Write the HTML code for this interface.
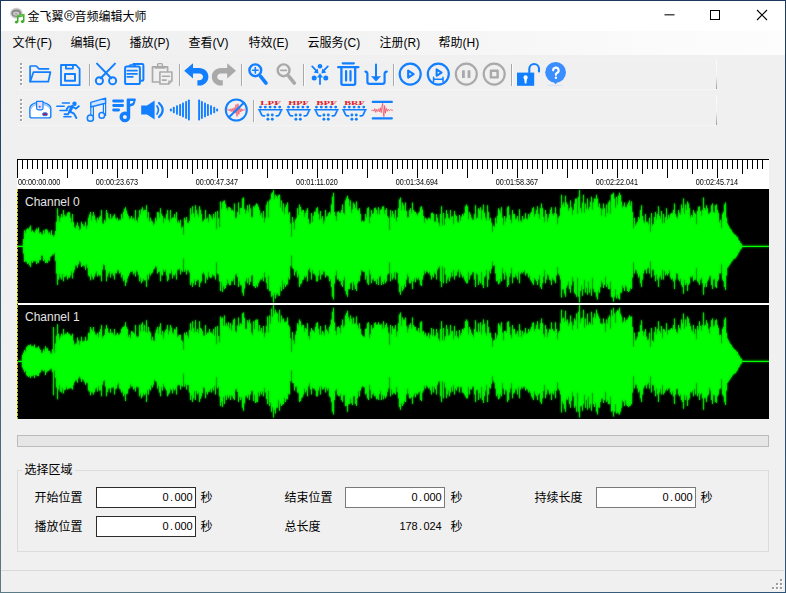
<!DOCTYPE html>
<html lang="zh"><head><meta charset="utf-8"><title>audio editor</title>
<style>
html,body{margin:0;padding:0}
body{width:786px;height:593px;position:relative;overflow:hidden;background:#f0f0f0;font-family:"Liberation Sans",sans-serif;color:#000}
div{position:absolute;box-sizing:border-box}
#titlebar{left:1px;top:1px;width:784px;height:30px;background:#fff}
#menubar{left:1px;top:31px;width:784px;height:24px;background:linear-gradient(to right,#f0f0f0 0%,#f2f2f2 40%,#fbfbfb 85%,#fdfdfd 100%)}
#tb1{left:18px;top:59px;width:699px;height:31px;border-top:1px solid #f2f2f2;border-bottom:1px solid #f5f5f5}
#tb2{left:18px;top:95px;width:699px;height:31px;border-top:1px solid #f2f2f2;border-bottom:1px solid #f5f5f5}
.tbend{left:716px;width:1px;background:linear-gradient(to bottom,#fdfdfd 0%,#f4f4f4 55%,#9a9a9a 100%)}
.grip{left:20px;width:2px;background:repeating-linear-gradient(to bottom,#a3a3a3 0,#a3a3a3 2px,transparent 2px,transparent 4px)}
.grip2{left:21px;width:2px;background:repeating-linear-gradient(to bottom,#fff 0,#fff 2px,transparent 2px,transparent 4px)}
#ruler{left:17px;top:159px;width:752px;height:30px;background:#fff;border-top:1px solid #000}
.tl{top:178px;font-size:8.2px;line-height:9px;white-space:nowrap;color:#000;transform:scaleX(0.885)}
#wavebox{left:17px;top:189px;width:752px;height:230px;background:#000}
#chsep{left:17px;top:303px;width:752px;height:2px;background:#fff}
.chl{left:25px;font-size:12px;line-height:14px;color:#e4e4e4;white-space:nowrap}
#cursor{left:17px;top:189px;width:1px;height:230px;background:repeating-linear-gradient(to bottom,#c4c400 0,#c4c400 3px,#000 3px,#000 4px)}
#prog{left:17px;top:435px;width:752px;height:12px;background:#e6e6e6;border:1px solid #bcbcbc}
#group{left:17px;top:470px;width:752px;height:82px;border:1px solid #dcdcdc}
#glabel{left:22px;top:462px;width:53px;height:14px;background:#f0f0f0}
.tb{height:21px;width:100px;background:#fff;border:1px solid #7a7a7a}
.tb.dk{border-color:#2b2b2b}
.num{font-size:11px;line-height:12px;white-space:nowrap;text-align:right;width:60px;color:#000}
.num span{display:inline-block;width:6px;text-align:center}
#statusline{left:1px;top:570px;width:783px;height:1px;background:#d9d9d9}
.gd{width:2px;height:2px;background:#9d9d9d;box-shadow:1px 1px 0 #fff}
svg{position:absolute;left:0;top:0}
svg text.ui{font-family:"Liberation Sans","Noto Sans CJK SC",sans-serif;font-size:12px;fill:#000}
svg text.flt{font-family:"Liberation Serif",serif;font-weight:bold;font-size:6.5px;fill:#e0202c}
</style></head><body>
<div id="titlebar"></div>
<div id="menubar"></div>
<div id="tb1"></div><div id="tb2"></div>
<div class="tbend" style="top:60px;height:29px"></div><div class="tbend" style="top:96px;height:29px"></div>
<div class="grip2" style="top:64px;height:22px"></div><div class="grip2" style="top:100px;height:22px"></div>
<div class="grip" style="top:63px;height:22px"></div><div class="grip" style="top:99px;height:22px"></div>
<div id="ruler"></div>
<div class="tl" style="left:18px;transform-origin:left center">00:00:00.000</div><div class="tl" style="left:77px;width:80px;text-align:center">00:00:23.673</div><div class="tl" style="left:177px;width:80px;text-align:center">00:00:47.347</div><div class="tl" style="left:277px;width:80px;text-align:center">00:01:11.020</div><div class="tl" style="left:377px;width:80px;text-align:center">00:01:34.694</div><div class="tl" style="left:477px;width:80px;text-align:center">00:01:58.367</div><div class="tl" style="left:577px;width:80px;text-align:center">00:02:22.041</div><div class="tl" style="left:677px;width:80px;text-align:center">00:02:45.714</div>
<div id="wavebox"></div>
<div id="prog"></div>
<div id="group"></div><div id="glabel"></div>
<div class="tb dk" style="left:96px;top:487px"></div>
<div class="tb dk" style="left:96px;top:516px"></div>
<div class="tb" style="left:345px;top:487px"></div>
<div class="tb" style="left:596px;top:487px"></div>
<div class="num" style="left:132.5px;top:491px"><span>0</span><span>.</span><span>0</span><span>0</span><span>0</span></div>
<div class="num" style="left:132.5px;top:520px"><span>0</span><span>.</span><span>0</span><span>0</span><span>0</span></div>
<div class="num" style="left:381.5px;top:491px"><span>0</span><span>.</span><span>0</span><span>0</span><span>0</span></div>
<div class="num" style="left:381.5px;top:520px"><span>1</span><span>7</span><span>8</span><span>.</span><span>0</span><span>2</span><span>4</span></div>
<div class="num" style="left:632.5px;top:491px"><span>0</span><span>.</span><span>0</span><span>0</span><span>0</span></div>
<div id="statusline"></div>
<div class="gd" style="left:780px;top:579px"></div>
<div class="gd" style="left:776px;top:583px"></div><div class="gd" style="left:780px;top:583px"></div>
<div class="gd" style="left:772px;top:587px"></div><div class="gd" style="left:776px;top:587px"></div><div class="gd" style="left:780px;top:587px"></div>
<svg width="786" height="593" viewBox="0 0 786 593">
<text class="ui" x="27.6" y="20.6">金飞翼</text>
<circle cx="69.5" cy="15.5" r="4.75" fill="none" stroke="#000" stroke-width="0.95"/>
<text x="69.6" y="18.2" text-anchor="middle" font-family="Liberation Sans,sans-serif" font-size="7.6" fill="#000">R</text>
<text class="ui" x="74.4" y="20.6">音频编辑大师</text>
<text class="ui" x="12.6" y="47.2">文件(F)</text>
<text class="ui" x="70.6" y="47.2">编辑(E)</text>
<text class="ui" x="129.6" y="47.2">播放(P)</text>
<text class="ui" x="188.6" y="47.2">查看(V)</text>
<text class="ui" x="248.6" y="47.2">特效(E)</text>
<text class="ui" x="307.6" y="47.2">云服务(C)</text>
<text class="ui" x="379.6" y="47.2">注册(R)</text>
<text class="ui" x="438.6" y="47.2">帮助(H)</text>
<text class="ui" x="24.6" y="474.2">选择区域</text>
<text class="ui" x="34.6" y="501.9">开始位置</text>
<text class="ui" x="34.6" y="530.9">播放位置</text>
<text class="ui" x="284.6" y="501.9">结束位置</text>
<text class="ui" x="284.6" y="530.9">总长度</text>
<text class="ui" x="534.6" y="501.9">持续长度</text>
<text class="ui" x="200.6" y="501.9">秒</text>
<text class="ui" x="200.6" y="530.9">秒</text>
<text class="ui" x="450.6" y="501.9">秒</text>
<text class="ui" x="450.6" y="530.9">秒</text>
<text class="ui" x="700.6" y="501.9">秒</text>
<path fill="#000" d="M17 160v18h1v-18zM22 160v9h1v-9zM27 160v9h1v-9zM32 160v9h1v-9zM37 160v9h1v-9zM42 160v14h1v-14zM47 160v9h1v-9zM52 160v9h1v-9zM57 160v9h1v-9zM62 160v9h1v-9zM67 160v18h1v-18zM72 160v9h1v-9zM77 160v9h1v-9zM82 160v9h1v-9zM87 160v9h1v-9zM92 160v14h1v-14zM97 160v9h1v-9zM102 160v9h1v-9zM107 160v9h1v-9zM112 160v9h1v-9zM117 160v18h1v-18zM122 160v9h1v-9zM127 160v9h1v-9zM132 160v9h1v-9zM137 160v9h1v-9zM142 160v14h1v-14zM147 160v9h1v-9zM152 160v9h1v-9zM157 160v9h1v-9zM162 160v9h1v-9zM167 160v18h1v-18zM172 160v9h1v-9zM177 160v9h1v-9zM182 160v9h1v-9zM187 160v9h1v-9zM192 160v14h1v-14zM197 160v9h1v-9zM202 160v9h1v-9zM207 160v9h1v-9zM212 160v9h1v-9zM217 160v18h1v-18zM222 160v9h1v-9zM227 160v9h1v-9zM232 160v9h1v-9zM237 160v9h1v-9zM242 160v14h1v-14zM247 160v9h1v-9zM252 160v9h1v-9zM257 160v9h1v-9zM262 160v9h1v-9zM267 160v18h1v-18zM272 160v9h1v-9zM277 160v9h1v-9zM282 160v9h1v-9zM287 160v9h1v-9zM292 160v14h1v-14zM297 160v9h1v-9zM302 160v9h1v-9zM307 160v9h1v-9zM312 160v9h1v-9zM317 160v18h1v-18zM322 160v9h1v-9zM327 160v9h1v-9zM332 160v9h1v-9zM337 160v9h1v-9zM342 160v14h1v-14zM347 160v9h1v-9zM352 160v9h1v-9zM357 160v9h1v-9zM362 160v9h1v-9zM367 160v18h1v-18zM372 160v9h1v-9zM377 160v9h1v-9zM382 160v9h1v-9zM387 160v9h1v-9zM392 160v14h1v-14zM397 160v9h1v-9zM402 160v9h1v-9zM407 160v9h1v-9zM412 160v9h1v-9zM417 160v18h1v-18zM422 160v9h1v-9zM427 160v9h1v-9zM432 160v9h1v-9zM437 160v9h1v-9zM442 160v14h1v-14zM447 160v9h1v-9zM452 160v9h1v-9zM457 160v9h1v-9zM462 160v9h1v-9zM467 160v18h1v-18zM472 160v9h1v-9zM477 160v9h1v-9zM482 160v9h1v-9zM487 160v9h1v-9zM492 160v14h1v-14zM497 160v9h1v-9zM502 160v9h1v-9zM507 160v9h1v-9zM512 160v9h1v-9zM517 160v18h1v-18zM522 160v9h1v-9zM527 160v9h1v-9zM532 160v9h1v-9zM537 160v9h1v-9zM542 160v14h1v-14zM547 160v9h1v-9zM552 160v9h1v-9zM557 160v9h1v-9zM562 160v9h1v-9zM567 160v18h1v-18zM572 160v9h1v-9zM577 160v9h1v-9zM582 160v9h1v-9zM587 160v9h1v-9zM592 160v14h1v-14zM597 160v9h1v-9zM602 160v9h1v-9zM607 160v9h1v-9zM612 160v9h1v-9zM617 160v18h1v-18zM622 160v9h1v-9zM627 160v9h1v-9zM632 160v9h1v-9zM637 160v9h1v-9zM642 160v14h1v-14zM647 160v9h1v-9zM652 160v9h1v-9zM657 160v9h1v-9zM662 160v9h1v-9zM667 160v18h1v-18zM672 160v9h1v-9zM677 160v9h1v-9zM682 160v9h1v-9zM687 160v9h1v-9zM692 160v14h1v-14zM697 160v9h1v-9zM702 160v9h1v-9zM707 160v9h1v-9zM712 160v9h1v-9zM717 160v18h1v-18zM722 160v9h1v-9zM727 160v9h1v-9zM732 160v9h1v-9zM737 160v9h1v-9zM742 160v14h1v-14zM747 160v9h1v-9zM752 160v9h1v-9zM757 160v9h1v-9zM762 160v9h1v-9z"/>
<path fill="none" stroke="#117fff" stroke-width="1.7" stroke-linecap="round" stroke-linejoin="round" d="M30.1 81.6V66.6Q30.1 66 30.7 66H36.2L39 68.8H48.6"/>
<path fill="none" stroke="#117fff" stroke-width="1.7" stroke-linecap="round" stroke-linejoin="round" d="M33.4 72.2H50.4L48.3 81.7H30.2Z"/>
<path fill="none" stroke="#117fff" stroke-width="1.8" stroke-linecap="round" stroke-linejoin="round" stroke-linejoin="miter" d="M61 65H76L79.6 68.8V85.2H61Z"/>
<path fill="none" stroke="#117fff" stroke-width="1.8" stroke-linecap="round" stroke-linejoin="round" d="M65.9 65V68.6H72.9V65"/>
<rect fill="none" stroke="#117fff" stroke-width="2" stroke-linecap="round" stroke-linejoin="round" x="65" y="74" width="10" height="6.8"/>
<rect x="89.0" y="64" width="1" height="22" fill="#a9a9a9"/><rect x="90.0" y="64" width="1" height="22" fill="#fbfbfb"/>
<rect x="179.0" y="64" width="1" height="22" fill="#a9a9a9"/><rect x="180.0" y="64" width="1" height="22" fill="#fbfbfb"/>
<rect x="241.0" y="64" width="1" height="22" fill="#a9a9a9"/><rect x="242.0" y="64" width="1" height="22" fill="#fbfbfb"/>
<rect x="303.0" y="64" width="1" height="22" fill="#a9a9a9"/><rect x="304.0" y="64" width="1" height="22" fill="#fbfbfb"/>
<rect x="393.0" y="64" width="1" height="22" fill="#a9a9a9"/><rect x="394.0" y="64" width="1" height="22" fill="#fbfbfb"/>
<rect x="511.0" y="64" width="1" height="22" fill="#a9a9a9"/><rect x="512.0" y="64" width="1" height="22" fill="#fbfbfb"/>
<path fill="none" stroke="#117fff" stroke-width="2" stroke-linecap="round" stroke-linejoin="round" d="M97 63.6L111.3 78.2M115 63.6L100.7 78.2"/>
<circle fill="none" stroke="#117fff" stroke-width="2" stroke-linecap="round" stroke-linejoin="round" cx="99.4" cy="80.7" r="3.55"/><circle fill="none" stroke="#117fff" stroke-width="2" stroke-linecap="round" stroke-linejoin="round" cx="112.6" cy="80.7" r="3.55"/>
<path fill="none" stroke="#117fff" stroke-width="2" stroke-linecap="round" stroke-linejoin="round" d="M133.4 64H142.2Q143.4 64 143.4 65.2V79.6Q143.4 80.8 142.2 80.8H141.4"/>
<ellipse fill="#f0f0f0" stroke="#117fff" stroke-width="1.4" stroke-linecap="round" stroke-linejoin="round" cx="132.3" cy="66" rx="3" ry="1.2"/>
<rect fill="#f0f0f0" stroke="#117fff" stroke-width="2" stroke-linecap="round" stroke-linejoin="round" x="125.1" y="66.6" width="14.8" height="17.5" rx="1.6"/>
<path fill="none" stroke="#117fff" stroke-width="1.8" stroke-linecap="round" stroke-linejoin="round" stroke-linecap="butt" d="M127.4 70.6H137M127.4 73.9H137M127.4 76.8H132.8"/>
<path fill="none" stroke="#a9a9a9" stroke-width="1.7" stroke-linecap="round" stroke-linejoin="round" d="M159 82H152.5V66.8H167.6V71"/>
<rect fill="#ececec" stroke="#a9a9a9" stroke-width="1.4" stroke-linecap="round" stroke-linejoin="round" x="157.6" y="63.6" width="4.8" height="3" rx="1"/>
<rect fill="#a9a9a9" x="154.6" y="66.2" width="10.8" height="2.5"/>
<path fill="#f0f0f0" stroke="#a9a9a9" stroke-width="1.6" stroke-linecap="round" stroke-linejoin="round" d="M159.9 72H171.9V80.8L168.6 84H159.9Z"/>
<path fill="none" stroke="#a9a9a9" stroke-width="1.2" stroke-linecap="round" stroke-linejoin="round" d="M171.6 81H168.8V83.8"/>
<path fill="none" stroke="#a9a9a9" stroke-width="1.6" stroke-linecap="round" stroke-linejoin="round" stroke-linecap="butt" d="M162.4 76.2H169.6M162.4 80.1H166.2"/>
<path fill="#117fff" d="M184.2 70.8L193 63.2V68H199.2C204.4 68 208.4 71.8 208.4 76.8C208.4 81.8 204.4 85.6 199.2 85.6H197.4V80.2H199.2C201.4 80.2 203 78.8 203 76.8C203 74.8 201.4 73.4 199.2 73.4H193V78.6Z"/>
<path fill="#a9a9a9" transform="translate(420.2 0) scale(-1 1)" d="M184.2 70.8L193 63.2V68H199.2C204.4 68 208.4 71.8 208.4 76.8C208.4 81.8 204.4 85.6 199.2 85.6H197.4V80.2H199.2C201.4 80.2 203 78.8 203 76.8C203 74.8 201.4 73.4 199.2 73.4H193V78.6Z"/>
<circle fill="none" stroke="#117fff" stroke-width="2.4" stroke-linecap="round" stroke-linejoin="round" cx="255.3" cy="70.3" r="5.9"/><path fill="none" stroke="#117fff" stroke-width="3.6" stroke-linecap="round" stroke-linejoin="round" d="M260.6 76.4L266 83.2"/>
<path fill="none" stroke="#117fff" stroke-width="1.6" stroke-linecap="round" stroke-linejoin="round" d="M252.5 70.3H258.1M255.3 67.5V73.1"/>
<circle fill="none" stroke="#a9a9a9" stroke-width="2.4" stroke-linecap="round" stroke-linejoin="round" cx="283.6" cy="70.3" r="5.9"/><path fill="none" stroke="#a9a9a9" stroke-width="3.6" stroke-linecap="round" stroke-linejoin="round" d="M288.9 76.4L294.3 83.2"/>
<path fill="none" stroke="#a9a9a9" stroke-width="1.8" stroke-linecap="round" stroke-linejoin="round" d="M280.8 70.3H286.4"/>
<circle fill="#117fff" cx="320" cy="66.2" r="2.3"/><circle fill="#117fff" cx="314.2" cy="78" r="2.5"/><circle fill="#117fff" cx="325.8" cy="78" r="2.5"/>
<path fill="none" stroke="#117fff" stroke-width="1.8" stroke-linecap="round" stroke-linejoin="round" d="M312.2 66.4L316.8 71.2M327.8 66.4L323.2 71.2M320 84V76"/>
<path fill="#117fff" d="M318.6 73.4L313.6 72.4L317.6 68.4ZM321.4 73.4L326.4 72.4L322.4 68.4ZM320 73.2L317 77.6H323Z"/>
<path fill="none" stroke="#117fff" stroke-width="2.3" stroke-linecap="round" stroke-linejoin="round" d="M342.8 63.3H353.8M338.2 67.2H358.4"/>
<path fill="none" stroke="#117fff" stroke-width="2.3" stroke-linecap="round" stroke-linejoin="round" d="M341.4 67.4V83.2Q341.4 84.8 343 84.8H353.6Q355.2 84.8 355.2 83.2V67.4"/>
<path fill="none" stroke="#117fff" stroke-width="2.2" stroke-linecap="round" stroke-linejoin="round" d="M346.1 71V80.6M350.5 71V80.6"/>
<path fill="none" stroke="#117fff" stroke-width="2.2" stroke-linecap="round" stroke-linejoin="round" d="M365.4 71.6Q367.4 71.8 367.4 74V81.8Q367.4 83.9 369.6 83.9H382.4Q384.6 83.9 384.6 81.8V74Q384.6 71.8 386.8 71.6"/>
<path fill="none" stroke="#117fff" stroke-width="2" stroke-linecap="round" stroke-linejoin="round" d="M376 64.6V78"/><path fill="#117fff" d="M371 76.2H381L376 81.4Z"/>
<circle fill="none" stroke="#117fff" stroke-width="2.2" stroke-linecap="round" stroke-linejoin="round" cx="410.2" cy="74.1" r="10.5"/>
<path fill="none" stroke="#117fff" stroke-width="2.2" stroke-linecap="round" stroke-linejoin="round" stroke-linejoin="round" d="M408.2 70.6V77.6L413.6 74.1Z"/>
<circle fill="none" stroke="#117fff" stroke-width="2.2" stroke-linecap="round" stroke-linejoin="round" cx="438.3" cy="74.1" r="10.5"/>
<path fill="none" stroke="#117fff" stroke-width="2" stroke-linecap="round" stroke-linejoin="round" stroke-linejoin="round" d="M436.6 69.4V75.8L441.6 72.6Z"/>
<path fill="none" stroke="#117fff" stroke-width="1.5" stroke-linecap="round" stroke-linejoin="round" d="M433.6 79.3H443M433.6 77.2V81.4M443 77.2V81.4"/>
<circle fill="none" stroke="#a9a9a9" stroke-width="2.2" stroke-linecap="round" stroke-linejoin="round" cx="466.3" cy="74.1" r="10.5"/>
<rect fill="#a9a9a9" x="462" y="70.3" width="2.8" height="7.7"/><rect fill="#a9a9a9" x="467.6" y="70.3" width="2.8" height="7.7"/>
<circle fill="none" stroke="#a9a9a9" stroke-width="2.2" stroke-linecap="round" stroke-linejoin="round" cx="494.2" cy="74.1" r="10.5"/>
<rect fill="none" stroke="#a9a9a9" stroke-width="2.4" stroke-linecap="round" stroke-linejoin="round" stroke-linejoin="miter" x="490.9" y="70.8" width="6.7" height="6.6"/>
<rect fill="#117fff" x="517" y="72.6" width="17.2" height="13.2"/>
<path fill="none" stroke="#117fff" stroke-width="2.1" stroke-linecap="round" stroke-linejoin="round" d="M529.3 72.6V68.8A4.85 4.85 0 0 1 539 68.8V71.4"/>
<circle fill="#fff" cx="525.6" cy="77.4" r="2.1"/><path fill="#fff" d="M524.1 78H527.1L526.4 83.6H524.8Z"/>
<circle fill="#3b8eff" cx="555.6" cy="72.3" r="10.4"/><path fill="#3b8eff" d="M553.6 82L555.6 84.2L557.6 82Z"/>
<rect x="547" y="84.8" width="16" height="0.9" fill="#cfe0f7"/>
<g transform="translate(555.9 72.6) scale(0.8) translate(-555.6 -72.2)"><path fill="none" stroke="#fff" stroke-width="2.7" stroke-linecap="round" d="M552.2 69.4A3.4 3.4 0 1 1 556.8 72.6Q555.6 73.3 555.6 75"/><circle fill="#fff" cx="555.6" cy="78.6" r="1.5"/></g>
<path fill="#fff" stroke="#117fff" stroke-width="1.4" stroke-linecap="round" stroke-linejoin="round" d="M29.9 107.8Q30.6 104.2 36.4 102.6H43.6Q50 104.2 50.8 107.8V116Q50.8 117.9 48.9 117.9H31.8Q29.9 117.9 29.9 116Z"/>
<path fill="none" stroke="#8fc0ff" stroke-width="1.2" d="M30.8 109Q31.6 105.8 36.4 104.4M49.9 109Q49.2 105.8 43.4 104.4"/>
<path fill="#eeddf5" stroke="#117fff" stroke-width="1.2" stroke-linecap="round" stroke-linejoin="round" d="M36.6 101.4H43V108Q43 109.8 41.4 109.8H38.2Q36.6 109.8 36.6 108Z"/><circle fill="#117fff" cx="39.7" cy="106.8" r="1.05"/>
<rect x="42.6" y="112.8" width="4.8" height="2.9" rx="1.3" fill="#b01848" stroke="#117fff" stroke-width="0.9"/>
<path fill="none" stroke="#117fff" stroke-width="1.5" stroke-linecap="round" stroke-linejoin="round" d="M62.4 102.9H69.4M56.8 106.2H64.2M60 110.4H67.2M63.8 116.7H71"/>
<circle fill="#117fff" cx="74.5" cy="103.7" r="2.2"/>
<path fill="none" stroke="#117fff" stroke-width="3" stroke-linecap="round" stroke-linejoin="round" d="M72.2 106.6L69.8 111.2"/>
<path fill="none" stroke="#117fff" stroke-width="1.9" stroke-linecap="round" stroke-linejoin="round" d="M72.6 106.4L68.4 106.8L66.6 109.4M73 107L76 108.6L78.8 106.2M70 111.6L74 113.6L76.4 118M69.6 111.4L68.2 114.2H64.6"/>
<path fill="#cfe4ff" stroke="#117fff" stroke-width="1.4" stroke-linecap="round" stroke-linejoin="round" d="M90.8 102.4L105.6 98.2V103.2L90.8 107Z"/>
<path fill="none" stroke="#117fff" stroke-width="1.2" stroke-linecap="round" stroke-linejoin="round" d="M90.8 106.6V115.6M93.4 106.4V116.4M103.4 103.8V112.8M105.6 103V115.4"/>
<circle fill="#d8eaff" stroke="#117fff" stroke-width="1.5" stroke-linecap="round" stroke-linejoin="round" cx="90.4" cy="118.2" r="3.1"/><circle fill="#f0f0f0" stroke="#117fff" stroke-width="1.5" stroke-linecap="round" stroke-linejoin="round" cx="101.8" cy="115.4" r="2.8"/>
<path fill="none" stroke="#117fff" stroke-width="2.8" stroke-linecap="round" stroke-linejoin="round" d="M113.6 101H122.6M113.6 105.5H122.6M113.6 110H118.6"/>
<path fill="#117fff" d="M126.7 99.6Q126.7 98.5 127.8 98.5H134.8Q136.2 98.5 135.8 99.8L134.6 104Q134.3 105 133.4 105.4L130.2 106.6V116H126.7Z"/><path fill="#f0f0f0" d="M130 100.9H133.5L132.6 102.9L130 103.9Z"/>
<circle fill="none" stroke="#117fff" stroke-width="3.4" stroke-linecap="round" stroke-linejoin="round" cx="124.9" cy="116.9" r="3.7"/>
<path fill="#117fff" d="M141.2 105.6H147L154.6 100.6V119.4L147 114.4H141.2Z"/>
<path fill="none" stroke="#117fff" stroke-width="1.7" stroke-linecap="round" stroke-linejoin="round" d="M157 106Q159.8 110 157 114"/><path fill="none" stroke="#117fff" stroke-width="2.2" stroke-linecap="round" stroke-linejoin="round" d="M159 103Q166.4 110 159 117"/>
<rect fill="#117fff" x="169.95" y="108.40" width="1.9" height="3.20" rx="0.8"/>
<rect fill="#117fff" x="172.85" y="106.80" width="1.9" height="6.40" rx="0.8"/>
<rect fill="#117fff" x="176.05" y="105.20" width="1.9" height="9.60" rx="0.8"/>
<rect fill="#117fff" x="179.15" y="103.90" width="1.9" height="12.20" rx="0.8"/>
<rect fill="#117fff" x="182.05" y="102.60" width="1.9" height="14.80" rx="0.8"/>
<rect fill="#117fff" x="185.15" y="101.10" width="1.9" height="17.80" rx="0.8"/>
<rect fill="#117fff" x="187.95" y="99.50" width="1.9" height="21.00" rx="0.8"/>
<rect fill="#117fff" x="216.15" y="108.40" width="1.9" height="3.20" rx="0.8"/>
<rect fill="#117fff" x="213.25" y="106.80" width="1.9" height="6.40" rx="0.8"/>
<rect fill="#117fff" x="210.05" y="105.20" width="1.9" height="9.60" rx="0.8"/>
<rect fill="#117fff" x="206.95" y="103.90" width="1.9" height="12.20" rx="0.8"/>
<rect fill="#117fff" x="204.05" y="102.60" width="1.9" height="14.80" rx="0.8"/>
<rect fill="#117fff" x="200.95" y="101.10" width="1.9" height="17.80" rx="0.8"/>
<rect fill="#117fff" x="198.15" y="99.50" width="1.9" height="21.00" rx="0.8"/>
<path fill="none" stroke="#f0485c" stroke-width="0.75" stroke-linejoin="round" d="M227 110.2L228.2 109.4L229.2 110.9L230.2 108.8L231.2 111.6L232.2 108.4L233.2 112L234.2 107.6L235.2 113.2L236 104.6L237 116.4L237.9 103.8L238.8 114.4L239.8 107.4L240.8 112L241.8 108.8L242.8 110.9L243.8 109.6L245.4 110.1"/>
<circle fill="none" stroke="#117fff" stroke-width="2" stroke-linecap="round" stroke-linejoin="round" cx="236.3" cy="110" r="10.5"/><path fill="none" stroke="#117fff" stroke-width="2" stroke-linecap="round" stroke-linejoin="round" d="M229.2 117L243.6 103"/>
<rect x="253" y="100" width="1" height="22" fill="#a9a9a9"/><rect x="254" y="100" width="1" height="22" fill="#fbfbfb"/>
<g transform="translate(0 0)">
<text class="flt" transform="translate(260.2 104.6) scale(1.68 1)">LPF</text>
<circle fill="#117fff" cx="260.50" cy="107.1" r="1.45"/>
<circle fill="#117fff" cx="265.30" cy="107.1" r="1.45"/>
<circle fill="#117fff" cx="270.10" cy="107.1" r="1.45"/>
<circle fill="#117fff" cx="274.90" cy="107.1" r="1.45"/>
<circle fill="#117fff" cx="279.70" cy="107.1" r="1.45"/>
<path fill="none" stroke="#117fff" stroke-width="1.5" stroke-linecap="round" stroke-linejoin="round" d="M258.6 109.8H282.2"/><path fill="none" stroke="#117fff" stroke-width="1.7" stroke-linecap="round" stroke-linejoin="round" d="M259.8 110.8L261.4 114.4Q262 115.8 263.4 115.8H264.6M281 110.8L279.4 114.4Q278.8 115.8 277.4 115.8H276.2"/>
<circle fill="#117fff" cx="267.9" cy="115" r="1.45"/>
<circle fill="#117fff" cx="267.9" cy="119.2" r="1.45"/>
<circle fill="#117fff" cx="272.3" cy="115" r="1.45"/>
<circle fill="#117fff" cx="272.3" cy="119.2" r="1.45"/>
</g>
<g transform="translate(28 0)">
<text class="flt" transform="translate(260.2 104.6) scale(1.585 1)">HPF</text>
<circle fill="#117fff" cx="260.50" cy="107.1" r="1.45"/>
<circle fill="#117fff" cx="265.30" cy="107.1" r="1.45"/>
<circle fill="#117fff" cx="270.10" cy="107.1" r="1.45"/>
<circle fill="#117fff" cx="274.90" cy="107.1" r="1.45"/>
<circle fill="#117fff" cx="279.70" cy="107.1" r="1.45"/>
<path fill="none" stroke="#117fff" stroke-width="1.5" stroke-linecap="round" stroke-linejoin="round" d="M258.6 109.8H282.2"/><path fill="none" stroke="#117fff" stroke-width="1.7" stroke-linecap="round" stroke-linejoin="round" d="M259.8 110.8L261.4 114.4Q262 115.8 263.4 115.8H264.6M281 110.8L279.4 114.4Q278.8 115.8 277.4 115.8H276.2"/>
<circle fill="#117fff" cx="267.9" cy="115" r="1.45"/>
<circle fill="#117fff" cx="267.9" cy="119.2" r="1.45"/>
<circle fill="#117fff" cx="272.3" cy="115" r="1.45"/>
<circle fill="#117fff" cx="272.3" cy="119.2" r="1.45"/>
</g>
<g transform="translate(56 0)">
<text class="flt" transform="translate(260.2 104.6) scale(1.68 1)">BPF</text>
<circle fill="#117fff" cx="260.50" cy="107.1" r="1.45"/>
<circle fill="#117fff" cx="265.30" cy="107.1" r="1.45"/>
<circle fill="#117fff" cx="270.10" cy="107.1" r="1.45"/>
<circle fill="#117fff" cx="274.90" cy="107.1" r="1.45"/>
<circle fill="#117fff" cx="279.70" cy="107.1" r="1.45"/>
<path fill="none" stroke="#117fff" stroke-width="1.5" stroke-linecap="round" stroke-linejoin="round" d="M258.6 109.8H282.2"/><path fill="none" stroke="#117fff" stroke-width="1.7" stroke-linecap="round" stroke-linejoin="round" d="M259.8 110.8L261.4 114.4Q262 115.8 263.4 115.8H264.6M281 110.8L279.4 114.4Q278.8 115.8 277.4 115.8H276.2"/>
<circle fill="#117fff" cx="267.9" cy="115" r="1.45"/>
<circle fill="#117fff" cx="267.9" cy="119.2" r="1.45"/>
<circle fill="#117fff" cx="272.3" cy="115" r="1.45"/>
<circle fill="#117fff" cx="272.3" cy="119.2" r="1.45"/>
</g>
<g transform="translate(84 0)">
<text class="flt" transform="translate(260.2 104.6) scale(1.585 1)">BRF</text>
<circle fill="#117fff" cx="260.50" cy="107.1" r="1.45"/>
<circle fill="#117fff" cx="265.30" cy="107.1" r="1.45"/>
<circle fill="#117fff" cx="270.10" cy="107.1" r="1.45"/>
<circle fill="#117fff" cx="274.90" cy="107.1" r="1.45"/>
<circle fill="#117fff" cx="279.70" cy="107.1" r="1.45"/>
<path fill="none" stroke="#117fff" stroke-width="1.5" stroke-linecap="round" stroke-linejoin="round" d="M258.6 109.8H282.2"/><path fill="none" stroke="#117fff" stroke-width="1.7" stroke-linecap="round" stroke-linejoin="round" d="M259.8 110.8L261.4 114.4Q262 115.8 263.4 115.8H264.6M281 110.8L279.4 114.4Q278.8 115.8 277.4 115.8H276.2"/>
<circle fill="#117fff" cx="267.9" cy="115" r="1.45"/>
<circle fill="#117fff" cx="267.9" cy="119.2" r="1.45"/>
<circle fill="#117fff" cx="272.3" cy="115" r="1.45"/>
<circle fill="#117fff" cx="272.3" cy="119.2" r="1.45"/>
</g>
<path fill="none" stroke="#117fff" stroke-width="2.3" stroke-linecap="round" stroke-linejoin="round" d="M372.8 101.9H391.8M372.8 118.4H391.8"/>
<path fill="none" stroke="#f0485c" stroke-width="0.75" stroke-linejoin="round" d="M371.4 110.6L373 110L374 111.2L374.8 108.6L375.8 112.4L376.6 109.4L377.6 111.4L378.6 108.8L379.4 111.8L380.4 107.8L381.2 112.6L382 106L382.7 103.4L383.3 113L383.9 116.6L384.6 105.6L385.4 113.2L386.2 108.2L387.2 111.4L388.2 109.2L389.4 110.8L390.6 109.8L393 110.4"/>
<g>
<ellipse cx="16.4" cy="13.2" rx="6.5" ry="5.7" fill="#e2e2e2"/>
<ellipse cx="16.4" cy="13.2" rx="5.6" ry="4.6" fill="#b4b4b4"/>
<ellipse cx="16.3" cy="13.3" rx="4.6" ry="3.5" fill="#858585"/>
<ellipse cx="16.2" cy="13.6" rx="3.2" ry="2.2" fill="#c9c9c9"/>
<ellipse cx="16.2" cy="13.8" rx="1.5" ry="0.9" fill="#a8a8a8"/>
<path d="M17 15.2L24.5 13.8V21A1.9 1.5 -15 1 1 23 19.9V16.4L18.5 17.3V21.6A1.9 1.5 -15 1 1 17 20.5Z" fill="#3fae2a"/>
<path d="M17.4 15.6L24.1 14.4V15.4L17.4 16.6Z" fill="#5fd044"/>
</g>
<rect x="664.5" y="14.2" width="10" height="1.2" fill="#222"/>
<rect x="710.5" y="10.5" width="9" height="9" fill="none" stroke="#000" stroke-width="1"/>
<path d="M757 10L767 20M767 10L757 20" stroke="#000" stroke-width="1.1" fill="none"/>
<defs><filter id="wb" x="0" y="0" width="786" height="593" filterUnits="userSpaceOnUse"><feGaussianBlur stdDeviation="0.8"/></filter><clipPath id="wc"><rect x="17" y="189" width="752" height="230"/></clipPath></defs><g clip-path="url(#wc)" fill="#00ff00"><g filter="url(#wb)"><path d="M17 246.1V245.8h1V245.8h1V245.8h1V245.8h1V245.8h1V245.8h1V239.0h1V230.3h1V233.1h1V229.5h1V228.4h1V229.3h1V227.5h1V225.5h1V232.0h1V230.3h1V232.0h1V233.2h1V230.5h1V228.4h1V229.8h1V227.5h1V233.5h1V232.3h1V234.1h1V235.1h1V230.3h1V233.8h1V229.4h1V229.2h1V230.3h1V233.8h1V232.3h1V234.9h1V230.3h1V234.9h1V237.1h1V235.1h1V231.1h1V221.7h1V208.2h1V215.9h1V222.2h1V217.8h1V214.0h1V217.2h1V210.1h1V214.8h1V216.9h1V215.8h1V213.0h1V212.1h1V212.2h1V217.8h1V222.6h1V214.0h1V222.1h1V227.5h1V228.4h1V225.2h1V222.6h1V226.3h1V230.3h1V228.9h1V221.7h1V224.0h1V226.5h1V225.7h1V221.7h1V229.2h1V225.5h1V217.8h1V214.5h1V212.1h1V220.9h1V215.9h1V212.1h1V215.5h1V219.8h1V222.7h1V217.8h1V220.1h1V216.9h1V215.8h1V210.1h1V223.6h1V224.2h1V219.8h1V221.9h1V210.1h1V213.0h1V217.8h1V219.4h1V214.0h1V219.3h1V217.8h1V215.7h1V214.0h1V217.9h1V219.8h1V217.8h1V220.9h1V219.8h1V220.0h1V214.0h1V218.6h1V212.1h1V208.8h1V207.3h1V210.7h1V214.0h1V216.3h1V219.8h1V217.9h1V215.9h1V219.3h1V217.8h1V220.6h1V210.1h1V220.2h1V222.6h1V217.2h1V210.1h1V214.5h1V209.2h1V207.3h1V211.3h1V210.1h1V210.3h1V205.3h1V218.2h1V212.1h1V221.8h1V217.8h1V220.4h1V221.7h1V225.5h1V223.4h1V217.8h1V220.9h1V212.1h1V212.5h1V218.1h1V208.2h1V213.8h1V215.9h1V223.3h1V217.8h1V219.4h1V214.0h1V210.1h1V219.8h1V222.6h1V210.1h1V219.2h1V217.8h1V217.4h1V214.0h1V218.0h1V212.1h1V223.1h1V220.7h1V223.3h1V219.8h1V228.2h1V226.5h1V235.1h1V217.8h1V220.0h1V216.9h1V222.9h1V223.6h1V220.7h1V208.2h1V214.6h1V206.3h1V213.0h1V217.6h1V205.3h1V209.9h1V214.0h1V217.3h1V206.3h1V209.8h1V214.0h1V222.2h1V220.7h1V219.3h1V210.1h1V219.0h1V217.8h1V222.5h1V214.0h1V215.2h1V217.8h1V220.0h1V214.0h1V217.7h1V212.1h1V229.4h1V211.1h1V218.3h1V227.5h1V201.5h1V209.2h1V202.5h1V201.1h1V200.5h1V203.9h1V208.2h1V210.7h1V207.3h1V207.3h1V208.2h1V210.6h1V210.1h1V211.5h1V203.4h1V218.5h1V217.8h1V212.1h1V202.5h1V214.8h1V208.2h1V208.1h1V198.6h1V197.6h1V208.9h1V214.0h1V210.3h1V205.3h1V212.5h1V204.4h1V208.4h1V217.8h1V217.3h1V206.3h1V207.6h1V205.3h1V203.6h1V204.4h1V207.1h1V210.1h1V215.4h1V213.0h1V217.7h1V211.1h1V222.4h1V217.8h1V204.8h1V201.5h1V217.8h1V200.5h1V199.3h1V193.8h1V192.2h1V190.0h1V199.6h1V194.8h1V195.9h1V198.6h1V194.9h1V194.8h1V207.5h1V200.5h1V211.4h1V203.4h1V214.6h1V207.3h1V204.7h1V202.5h1V214.3h1V212.1h1V223.6h1V237.1h1V216.9h1V222.2h1V229.4h1V219.8h1V218.1h1V208.2h1V215.3h1V204.4h1V206.9h1V212.1h1V210.2h1V210.1h1V217.1h1V213.0h1V210.4h1V208.2h1V219.0h1V224.6h1V223.4h1V213.0h1V222.1h1V215.9h1V211.7h1V212.1h1V208.2h1V207.3h1V214.0h1V220.0h1V211.1h1V218.4h1V215.9h1V224.1h1V220.7h1V210.1h1V217.1h1V215.9h1V213.3h1V212.1h1V214.4h1V204.4h1V196.7h1V192.8h1V211.9h1V215.9h1V221.0h1V212.1h1V211.2h1V213.0h1V213.3h1V210.1h1V204.4h1V213.0h1V214.8h1V200.5h1V197.7h1V195.7h1V198.9h1V206.3h1V200.5h1V213.1h1V209.2h1V202.5h1V204.3h1V208.2h1V201.5h1V210.1h1V210.7h1V208.2h1V214.0h1V222.0h1V220.7h1V221.7h1V221.3h1V214.0h1V217.6h1V208.2h1V207.3h1V223.6h1V217.0h1V210.1h1V214.0h1V213.6h1V208.2h1V207.8h1V210.1h1V214.5h1V207.3h1V214.6h1V210.1h1V209.2h1V206.8h1V206.3h1V214.0h1V210.1h1V208.2h1V216.1h1V217.8h1V230.3h1V210.1h1V216.8h1V211.1h1V214.0h1V218.3h1V210.1h1V221.7h1V217.3h1V208.2h1V199.6h1V197.6h1V210.6h1V202.5h1V205.3h1V210.2h1V202.5h1V211.1h1V217.8h1V217.3h1V210.1h1V208.2h1V213.4h1V202.5h1V210.1h1V211.7h1V212.1h1V213.8h1V215.9h1V213.0h1V211.8h1V207.3h1V206.3h1V209.8h1V215.9h1V222.9h1V217.8h1V218.9h1V220.7h1V217.8h1V218.3h1V219.8h1V213.0h1V212.7h1V214.0h1V221.7h1V221.9h1V214.0h1V217.8h1V222.7h1V226.5h1V214.0h1V206.3h1V225.5h1V213.0h1V225.5h1V218.4h1V210.1h1V214.0h1V217.9h1V219.8h1V210.1h1V217.1h1V215.9h1V224.6h1V211.1h1V214.7h1V215.9h1V221.7h1V223.1h1V215.0h1V220.7h1V216.7h1V214.0h1V216.0h1V213.0h1V206.3h1V204.4h1V206.3h1V219.8h1V212.1h1V214.5h1V217.8h1V219.8h1V220.3h1V214.0h1V205.3h1V218.7h1V217.8h1V208.2h1V209.7h1V207.3h1V219.8h1V210.1h1V204.4h1V212.8h1V217.8h1V220.7h1V205.3h1V212.1h1V219.9h1V217.8h1V222.6h1V232.3h1V225.5h1V227.1h1V217.8h1V223.6h1V215.7h1V208.2h1V210.1h1V213.1h1V207.3h1V217.8h1V225.5h1V215.9h1V221.8h1V217.8h1V207.3h1V206.3h1V215.0h1V219.8h1V223.6h1V210.1h1V214.2h1V214.0h1V219.8h1V218.4h1V215.9h1V221.7h1V209.2h1V220.6h1V222.6h1V215.9h1V219.8h1V219.0h1V213.0h1V218.8h1V219.7h1V214.0h1V216.9h1V213.2h1V212.1h1V208.2h1V207.3h1V216.7h1V214.0h1V210.1h1V206.3h1V214.0h1V219.1h1V208.2h1V203.4h1V208.2h1V217.0h1V222.6h1V210.1h1V214.0h1V221.8h1V217.8h1V214.0h1V209.4h1V207.3h1V214.0h1V215.9h1V212.9h1V207.3h1V214.0h1V224.6h1V217.8h1V215.9h1V208.2h1V194.8h1V205.0h1V202.5h1V207.3h1V195.7h1V202.4h1V204.4h1V211.1h1V208.2h1V200.5h1V207.2h1V215.0h1V210.1h1V203.4h1V198.8h1V198.6h1V214.0h1V196.7h1V190.0h1V208.2h1V212.8h1V202.5h1V194.8h1V213.0h1V203.4h1V209.1h1V198.6h1V210.1h1V207.3h1V201.8h1V196.7h1V210.1h1V202.5h1V198.6h1V198.9h1V194.8h1V198.6h1V207.2h1V203.4h1V208.2h1V216.0h1V209.2h1V203.4h1V208.2h1V216.9h1V204.4h1V213.3h1V202.5h1V200.5h1V214.0h1V194.8h1V194.1h1V192.8h1V198.6h1V208.2h1V196.7h1V204.4h1V195.7h1V192.8h1V194.9h1V201.5h1V208.2h1V206.1h1V202.5h1V207.3h1V207.4h1V204.4h1V202.5h1V200.5h1V206.1h1V201.5h1V212.1h1V228.7h1V217.8h1V225.5h1V223.6h1V221.7h1V216.9h1V219.1h1V210.1h1V205.3h1V215.9h1V220.7h1V223.6h1V214.0h1V221.7h1V222.3h1V224.6h1V217.8h1V232.3h1V213.0h1V225.5h1V224.1h1V216.9h1V212.1h1V219.8h1V214.0h1V206.3h1V215.9h1V218.9h1V211.1h1V223.6h1V214.0h1V223.0h1V216.9h1V208.2h1V219.8h1V215.0h1V218.2h1V214.0h1V213.0h1V213.6h1V210.1h1V203.4h1V214.0h1V216.9h1V218.8h1V210.1h1V213.0h1V214.9h1V204.4h1V208.2h1V198.6h1V214.0h1V204.4h1V209.9h1V201.5h1V203.4h1V208.2h1V218.0h1V215.0h1V216.9h1V210.1h1V212.4h1V214.0h1V224.6h1V211.1h1V206.9h1V206.3h1V211.1h1V215.9h1V210.1h1V197.6h1V208.0h1V210.1h1V205.3h1V208.2h1V214.0h1V213.7h1V212.1h1V205.3h1V203.4h1V212.1h1V213.1h1V205.3h1V204.4h1V210.1h1V213.0h1V222.6h1V219.8h1V228.4h1V214.0h1V212.1h1V204.4h1V202.5h1V217.8h1V223.6h1V225.5h1V227.5h1V229.0h1V230.3h1V232.2h1V233.6h1V234.5h1V235.1h1V236.4h1V237.1h1V239.7h1V240.9h1V243.0h1V243.8h1V245.8h1V245.8h1V245.8h1V245.8h1V245.8h1V245.8h1V245.8h1V245.8h1V245.8h1V245.8h1V245.8h1V245.8h1V245.8h1V245.8h1V245.8h1V245.8h1V245.8h1V245.8h1V245.8h1V245.8h1V245.8h1V245.8h1V245.8h1V245.8h1V245.8h1V245.8h1V245.8h1V246.8h-1V246.8h-1V246.8h-1V246.8h-1V246.8h-1V246.8h-1V246.8h-1V246.8h-1V246.8h-1V246.8h-1V246.8h-1V246.8h-1V246.8h-1V246.8h-1V246.8h-1V246.8h-1V246.8h-1V246.8h-1V246.8h-1V246.8h-1V246.8h-1V246.8h-1V246.8h-1V246.8h-1V246.8h-1V246.8h-1V246.8h-1V248.6h-1V249.4h-1V251.5h-1V252.7h-1V255.3h-1V256.4h-1V258.2h-1V258.6h-1V259.2h-1V260.5h-1V262.1h-1V263.5h-1V265.0h-1V266.5h-1V267.8h-1V275.5h-1V290.0h-1V287.1h-1V281.3h-1V279.4h-1V264.0h-1V273.6h-1V273.3h-1V279.4h-1V281.3h-1V288.0h-1V287.1h-1V278.4h-1V279.4h-1V289.0h-1V285.1h-1V275.5h-1V276.3h-1V279.4h-1V281.3h-1V287.1h-1V283.2h-1V287.1h-1V294.8h-1V283.2h-1V277.5h-1V279.4h-1V285.1h-1V282.7h-1V281.3h-1V267.8h-1V279.4h-1V280.1h-1V281.3h-1V275.5h-1V277.5h-1V276.3h-1V283.2h-1V285.1h-1V290.9h-1V283.1h-1V285.1h-1V279.4h-1V293.8h-1V287.1h-1V285.1h-1V278.6h-1V281.3h-1V279.4h-1V273.6h-1V273.1h-1V279.4h-1V289.0h-1V281.3h-1V278.3h-1V279.4h-1V277.5h-1V270.1h-1V273.6h-1V275.5h-1V273.6h-1V275.5h-1V270.6h-1V279.4h-1V269.8h-1V279.4h-1V275.4h-1V277.5h-1V287.1h-1V279.4h-1V274.3h-1V281.3h-1V275.5h-1V269.4h-1V269.8h-1V277.5h-1V261.1h-1V273.6h-1V267.8h-1V268.6h-1V273.6h-1V269.8h-1V269.7h-1V273.6h-1V279.4h-1V287.1h-1V283.2h-1V275.2h-1V277.5h-1V273.6h-1V270.3h-1V269.8h-1V273.6h-1V261.9h-1V277.5h-1V289.0h-1V288.1h-1V290.9h-1V291.9h-1V290.9h-1V287.0h-1V285.1h-1V290.9h-1V287.7h-1V285.1h-1V292.8h-1V292.4h-1V299.6h-1V298.6h-1V295.0h-1V298.6h-1V289.0h-1V296.7h-1V301.5h-1V297.5h-1V296.7h-1V281.3h-1V289.0h-1V289.0h-1V284.1h-1V287.1h-1V276.5h-1V285.1h-1V288.0h-1V283.2h-1V280.4h-1V287.1h-1V292.8h-1V290.6h-1V299.6h-1V296.7h-1V292.3h-1V291.9h-1V289.0h-1V277.5h-1V295.7h-1V288.7h-1V292.8h-1V281.3h-1V294.8h-1V287.8h-1V292.8h-1V279.4h-1V289.0h-1V295.7h-1V285.2h-1V290.9h-1V302.5h-1V296.7h-1V277.5h-1V296.7h-1V294.3h-1V292.8h-1V281.3h-1V276.5h-1V285.4h-1V292.8h-1V289.0h-1V281.3h-1V285.1h-1V287.4h-1V296.7h-1V293.8h-1V289.0h-1V289.2h-1V297.6h-1V279.4h-1V275.5h-1V273.6h-1V266.9h-1V275.5h-1V283.2h-1V280.7h-1V279.4h-1V277.5h-1V285.1h-1V280.4h-1V279.4h-1V275.5h-1V274.1h-1V279.4h-1V283.2h-1V269.8h-1V276.6h-1V283.2h-1V289.0h-1V287.1h-1V275.0h-1V279.4h-1V285.1h-1V281.3h-1V279.4h-1V278.1h-1V285.1h-1V283.2h-1V281.3h-1V279.8h-1V275.5h-1V277.5h-1V272.9h-1V273.6h-1V275.5h-1V270.1h-1V271.7h-1V273.6h-1V271.7h-1V273.7h-1V283.2h-1V271.7h-1V279.4h-1V276.4h-1V273.6h-1V277.5h-1V277.0h-1V283.2h-1V267.8h-1V273.6h-1V277.1h-1V285.1h-1V287.1h-1V275.5h-1V271.4h-1V279.4h-1V273.6h-1V267.8h-1V281.3h-1V278.7h-1V283.2h-1V284.2h-1V280.5h-1V281.3h-1V273.6h-1V265.0h-1V265.9h-1V261.1h-1V268.8h-1V273.6h-1V270.8h-1V279.4h-1V287.1h-1V269.8h-1V275.5h-1V277.3h-1V288.0h-1V285.1h-1V271.7h-1V283.2h-1V280.7h-1V285.1h-1V274.6h-1V272.7h-1V287.1h-1V279.4h-1V271.9h-1V271.7h-1V274.6h-1V275.6h-1V279.4h-1V271.7h-1V283.2h-1V283.2h-1V281.3h-1V279.4h-1V276.0h-1V277.5h-1V274.6h-1V271.7h-1V277.5h-1V269.0h-1V271.7h-1V275.5h-1V276.1h-1V279.4h-1V269.8h-1V276.5h-1V272.2h-1V277.5h-1V281.3h-1V276.4h-1V279.4h-1V283.2h-1V274.6h-1V267.8h-1V283.2h-1V265.9h-1V287.1h-1V281.3h-1V265.9h-1V267.8h-1V269.8h-1V279.4h-1V273.9h-1V271.7h-1V277.5h-1V275.2h-1V279.4h-1V275.5h-1V272.0h-1V273.6h-1V271.7h-1V270.7h-1V273.6h-1V270.5h-1V275.5h-1V279.6h-1V286.1h-1V285.1h-1V280.3h-1V277.5h-1V279.4h-1V277.5h-1V282.3h-1V277.9h-1V281.3h-1V289.0h-1V280.3h-1V283.2h-1V283.2h-1V276.8h-1V273.6h-1V279.4h-1V287.1h-1V284.3h-1V289.0h-1V290.9h-1V286.0h-1V294.8h-1V291.9h-1V283.2h-1V272.9h-1V271.7h-1V279.4h-1V272.0h-1V277.5h-1V279.4h-1V273.2h-1V281.3h-1V262.1h-1V273.6h-1V274.7h-1V281.3h-1V283.2h-1V279.4h-1V284.2h-1V282.1h-1V285.1h-1V275.5h-1V276.8h-1V285.1h-1V279.0h-1V284.2h-1V280.8h-1V281.3h-1V278.3h-1V279.4h-1V283.2h-1V274.2h-1V269.8h-1V285.1h-1V283.2h-1V275.5h-1V279.4h-1V271.7h-1V271.7h-1V270.7h-1V269.9h-1V275.5h-1V281.3h-1V280.7h-1V283.2h-1V290.9h-1V289.0h-1V285.3h-1V281.3h-1V290.0h-1V282.5h-1V283.2h-1V289.0h-1V289.1h-1V296.7h-1V294.4h-1V290.9h-1V276.6h-1V280.3h-1V287.1h-1V285.1h-1V280.7h-1V281.3h-1V278.8h-1V279.4h-1V270.6h-1V275.5h-1V283.6h-1V299.6h-1V296.7h-1V287.1h-1V279.2h-1V281.3h-1V276.2h-1V275.5h-1V275.3h-1V277.5h-1V271.7h-1V270.7h-1V274.6h-1V274.7h-1V279.4h-1V270.6h-1V275.5h-1V281.3h-1V281.3h-1V275.5h-1V273.9h-1V273.6h-1V269.7h-1V279.4h-1V272.3h-1V267.8h-1V270.0h-1V281.3h-1V275.6h-1V277.5h-1V275.7h-1V279.4h-1V280.1h-1V283.2h-1V284.3h-1V287.1h-1V274.5h-1V277.5h-1V270.2h-1V271.7h-1V275.5h-1V269.1h-1V267.8h-1V255.3h-1V265.9h-1V279.4h-1V277.4h-1V284.2h-1V285.0h-1V287.1h-1V283.5h-1V289.0h-1V280.3h-1V290.9h-1V286.6h-1V295.7h-1V295.5h-1V292.8h-1V294.7h-1V298.6h-1V292.8h-1V302.5h-1V295.4h-1V296.7h-1V290.8h-1V290.9h-1V275.5h-1V289.0h-1V282.9h-1V277.5h-1V272.0h-1V281.3h-1V277.2h-1V279.4h-1V279.2h-1V281.3h-1V283.3h-1V287.1h-1V285.2h-1V288.0h-1V286.2h-1V286.1h-1V274.9h-1V275.5h-1V281.7h-1V285.1h-1V277.8h-1V283.2h-1V278.1h-1V281.3h-1V288.4h-1V295.7h-1V292.8h-1V285.3h-1V285.1h-1V280.7h-1V287.1h-1V277.1h-1V273.6h-1V274.4h-1V285.1h-1V278.5h-1V281.3h-1V280.7h-1V285.1h-1V285.2h-1V283.2h-1V279.2h-1V285.1h-1V288.1h-1V289.0h-1V286.0h-1V291.9h-1V282.2h-1V290.9h-1V281.3h-1V274.5h-1V273.6h-1V262.1h-1V279.4h-1V276.3h-1V275.5h-1V274.1h-1V277.5h-1V277.9h-1V276.5h-1V271.8h-1V279.4h-1V277.6h-1V283.2h-1V274.4h-1V271.7h-1V273.4h-1V281.3h-1V282.8h-1V287.1h-1V279.9h-1V279.4h-1V280.9h-1V285.1h-1V279.5h-1V283.2h-1V287.1h-1V282.0h-1V285.1h-1V272.5h-1V269.8h-1V270.6h-1V274.6h-1V269.5h-1V271.7h-1V258.2h-1V271.7h-1V270.5h-1V274.6h-1V268.2h-1V269.8h-1V269.8h-1V279.4h-1V273.3h-1V275.5h-1V275.1h-1V278.4h-1V270.1h-1V273.6h-1V273.2h-1V279.4h-1V281.3h-1V275.5h-1V269.4h-1V271.7h-1V269.4h-1V275.5h-1V274.7h-1V281.3h-1V271.2h-1V272.0h-1V273.6h-1V266.7h-1V265.9h-1V268.5h-1V269.8h-1V272.6h-1V273.4h-1V275.5h-1V272.7h-1V279.4h-1V274.8h-1V287.1h-1V280.3h-1V280.3h-1V278.5h-1V281.3h-1V283.2h-1V277.7h-1V281.3h-1V275.1h-1V271.7h-1V269.9h-1V276.5h-1V272.6h-1V274.6h-1V270.7h-1V271.7h-1V271.4h-1V273.6h-1V276.0h-1V278.4h-1V282.5h-1V286.1h-1V279.5h-1V281.3h-1V274.9h-1V277.5h-1V272.3h-1V273.6h-1V270.2h-1V269.8h-1V273.6h-1V272.9h-1V279.4h-1V275.7h-1V272.6h-1V273.7h-1V277.5h-1V271.2h-1V273.6h-1V276.6h-1V281.3h-1V269.9h-1V265.0h-1V264.0h-1V269.8h-1V281.3h-1V275.5h-1V275.5h-1V274.5h-1V276.5h-1V271.1h-1V273.6h-1V276.4h-1V279.4h-1V277.5h-1V273.9h-1V280.3h-1V276.5h-1V275.5h-1V267.8h-1V264.1h-1V269.8h-1V266.1h-1V265.0h-1V266.0h-1V266.9h-1V262.1h-1V261.1h-1V264.2h-1V267.8h-1V265.4h-1V265.0h-1V269.8h-1V272.8h-1V278.4h-1V271.2h-1V275.5h-1V277.8h-1V277.5h-1V279.4h-1V274.8h-1V276.5h-1V276.7h-1V281.3h-1V273.8h-1V279.4h-1V277.5h-1V273.7h-1V279.4h-1V285.1h-1V273.6h-1V260.7h-1V252.5h-1V254.4h-1V254.5h-1V256.3h-1V256.5h-1V261.1h-1V259.9h-1V263.0h-1V262.2h-1V263.0h-1V259.3h-1V261.1h-1V255.3h-1V255.5h-1V260.1h-1V260.0h-1V263.0h-1V262.2h-1V264.0h-1V260.8h-1V261.1h-1V261.0h-1V263.0h-1V260.7h-1V266.9h-1V265.3h-1V263.0h-1V264.0h-1V261.7h-1V261.0h-1V262.1h-1V253.4h-1V246.8h-1V246.8h-1V246.8h-1V246.8h-1V246.8h-1V246.8h-1Z"/><path d="M17 361.1V360.8h1V360.8h1V360.8h1V360.8h1V360.8h1V355.0h1V352.8h1V350.1h1V351.7h1V347.3h1V346.3h1V345.3h1V345.6h1V344.4h1V346.4h1V346.3h1V346.5h1V344.4h1V348.1h1V348.2h1V347.4h1V346.3h1V348.6h1V350.1h1V353.3h1V353.0h1V349.2h1V351.3h1V346.3h1V348.5h1V348.2h1V350.9h1V351.1h1V353.4h1V354.0h1V349.2h1V327.1h1V353.0h1V343.4h1V335.7h1V324.2h1V333.8h1V339.7h1V336.7h1V333.8h1V335.4h1V329.0h1V335.0h1V333.8h1V333.7h1V331.9h1V333.8h1V333.9h1V335.7h1V335.8h1V333.8h1V340.5h1V345.3h1V343.4h1V343.7h1V337.6h1V340.6h1V345.3h1V341.3h1V336.7h1V341.7h1V341.5h1V340.8h1V336.7h1V341.2h1V340.5h1V332.8h1V333.6h1V327.1h1V329.3h1V330.9h1V327.1h1V331.8h1V334.8h1V334.9h1V332.8h1V337.5h1V331.9h1V329.1h1V325.1h1V338.6h1V336.2h1V334.8h1V329.0h1V325.1h1V328.3h1V332.8h1V333.4h1V329.0h1V333.0h1V332.8h1V334.9h1V329.0h1V335.7h1V334.8h1V332.8h1V335.0h1V334.8h1V333.0h1V329.0h1V327.5h1V327.1h1V326.0h1V322.3h1V327.1h1V329.0h1V336.9h1V334.8h1V338.7h1V330.9h1V331.8h1V332.8h1V334.1h1V325.1h1V336.5h1V337.6h1V336.6h1V325.1h1V331.5h1V324.2h1V322.3h1V331.3h1V325.1h1V331.9h1V320.3h1V333.3h1V327.1h1V331.2h1V332.8h1V340.5h1V336.7h1V340.5h1V341.2h1V332.8h1V329.4h1V327.1h1V334.1h1V326.7h1V323.2h1V335.0h1V330.9h1V338.9h1V332.8h1V330.6h1V329.0h1V325.1h1V334.8h1V331.2h1V325.1h1V327.4h1V332.8h1V334.5h1V329.0h1V329.8h1V327.1h1V337.4h1V335.7h1V334.9h1V334.8h1V340.0h1V341.5h1V350.1h1V332.8h1V335.0h1V331.9h1V335.4h1V338.6h1V330.0h1V323.2h1V331.1h1V321.3h1V328.0h1V332.8h1V320.3h1V332.0h1V329.0h1V333.5h1V321.3h1V327.9h1V329.0h1V331.2h1V335.7h1V335.8h1V325.1h1V334.7h1V332.8h1V332.4h1V329.0h1V332.4h1V332.8h1V333.9h1V329.0h1V335.7h1V327.1h1V344.4h1V326.1h1V336.1h1V342.5h1V316.5h1V318.2h1V317.5h1V326.1h1V315.5h1V326.1h1V323.2h1V326.2h1V322.3h1V328.5h1V323.2h1V330.9h1V325.1h1V319.7h1V318.4h1V331.2h1V332.8h1V325.4h1V317.5h1V326.2h1V323.2h1V324.6h1V313.6h1V312.6h1V317.9h1V329.0h1V329.2h1V320.3h1V322.6h1V319.4h1V323.4h1V332.8h1V335.4h1V321.3h1V329.3h1V320.3h1V319.7h1V319.4h1V331.8h1V325.1h1V331.1h1V328.0h1V333.0h1V326.1h1V337.5h1V332.8h1V326.1h1V316.5h1V332.8h1V315.5h1V323.8h1V308.8h1V317.3h1V305.0h1V313.8h1V309.8h1V312.5h1V313.6h1V321.9h1V309.8h1V323.3h1V315.5h1V319.5h1V318.4h1V322.3h1V322.3h1V321.2h1V317.5h1V325.1h1V327.1h1V338.6h1V352.1h1V331.9h1V340.2h1V344.4h1V334.8h1V331.1h1V323.2h1V325.2h1V319.4h1V321.2h1V327.1h1V325.1h1V325.1h1V331.9h1V328.0h1V329.0h1V323.2h1V336.0h1V339.6h1V331.7h1V328.0h1V330.0h1V330.9h1V332.7h1V327.1h1V323.2h1V322.3h1V329.0h1V334.7h1V326.1h1V335.1h1V330.9h1V332.6h1V335.7h1V325.1h1V329.4h1V330.9h1V334.0h1V327.1h1V324.8h1V319.4h1V311.7h1V307.8h1V322.6h1V330.9h1V335.3h1V327.1h1V326.5h1V328.0h1V333.5h1V325.1h1V319.4h1V328.0h1V325.5h1V315.5h1V313.0h1V310.7h1V317.4h1V321.3h1V315.5h1V319.0h1V324.2h1V317.5h1V324.0h1V323.2h1V316.5h1V325.1h1V328.4h1V323.2h1V329.0h1V334.2h1V335.7h1V336.7h1V337.4h1V329.0h1V328.4h1V323.2h1V322.3h1V338.6h1V334.2h1V325.1h1V329.0h1V328.0h1V323.2h1V322.6h1V325.1h1V324.7h1V322.3h1V324.8h1V325.1h1V324.2h1V329.3h1V321.3h1V328.3h1V325.1h1V323.2h1V327.3h1V332.8h1V345.3h1V325.1h1V334.2h1V326.1h1V329.0h1V328.7h1V325.1h1V336.7h1V331.4h1V323.2h1V314.6h1V312.6h1V326.4h1V317.5h1V320.3h1V319.8h1V317.5h1V326.1h1V332.8h1V328.5h1V325.1h1V323.2h1V329.0h1V317.5h1V325.1h1V327.0h1V327.1h1V330.7h1V330.9h1V328.0h1V332.8h1V322.3h1V321.3h1V332.1h1V330.9h1V335.1h1V332.8h1V336.7h1V335.7h1V332.8h1V338.8h1V334.8h1V328.0h1V335.7h1V329.0h1V336.7h1V335.5h1V329.0h1V332.8h1V338.7h1V341.5h1V329.0h1V321.3h1V340.5h1V328.0h1V340.5h1V336.3h1V325.1h1V329.0h1V336.0h1V334.8h1V325.1h1V331.4h1V330.9h1V339.6h1V326.1h1V335.7h1V330.9h1V336.7h1V338.8h1V330.0h1V335.7h1V333.2h1V329.0h1V329.8h1V328.0h1V321.3h1V319.4h1V321.3h1V334.8h1V327.1h1V329.4h1V332.8h1V334.8h1V337.4h1V329.0h1V320.3h1V331.7h1V332.8h1V323.2h1V331.8h1V322.3h1V334.8h1V325.1h1V319.4h1V323.7h1V332.8h1V335.7h1V320.3h1V327.1h1V333.2h1V332.8h1V337.6h1V347.3h1V340.5h1V339.9h1V332.8h1V338.6h1V335.3h1V323.2h1V325.1h1V327.2h1V322.3h1V332.8h1V340.5h1V330.9h1V330.9h1V332.8h1V322.3h1V321.3h1V327.1h1V334.8h1V338.6h1V325.1h1V329.2h1V329.0h1V334.8h1V333.6h1V330.9h1V336.7h1V324.2h1V330.2h1V337.6h1V330.9h1V334.8h1V332.6h1V328.0h1V333.8h1V333.6h1V329.0h1V331.9h1V329.3h1V327.1h1V323.2h1V322.3h1V331.4h1V329.0h1V325.1h1V321.3h1V329.0h1V329.9h1V323.2h1V318.4h1V323.2h1V334.1h1V337.6h1V325.1h1V329.0h1V337.3h1V332.8h1V329.0h1V329.7h1V322.3h1V329.0h1V330.9h1V331.7h1V322.3h1V329.0h1V339.6h1V332.8h1V330.9h1V323.2h1V309.8h1V318.8h1V317.5h1V322.3h1V310.7h1V321.2h1V319.4h1V326.1h1V323.2h1V315.5h1V321.8h1V330.0h1V325.1h1V318.4h1V320.6h1V313.6h1V329.0h1V311.7h1V305.0h1V323.2h1V318.7h1V317.5h1V309.8h1V328.0h1V318.4h1V325.6h1V313.6h1V325.1h1V322.3h1V324.3h1V311.7h1V325.1h1V317.5h1V313.6h1V318.4h1V309.8h1V313.6h1V316.3h1V318.4h1V323.2h1V324.0h1V324.2h1V318.4h1V323.2h1V331.9h1V319.4h1V323.8h1V317.5h1V315.5h1V329.0h1V309.8h1V316.2h1V307.8h1V313.6h1V323.2h1V311.7h1V309.9h1V310.7h1V307.8h1V313.8h1V316.5h1V323.2h1V321.5h1V317.5h1V322.3h1V320.0h1V319.4h1V317.5h1V315.5h1V317.0h1V316.5h1V327.1h1V347.0h1V332.8h1V340.5h1V339.5h1V336.7h1V331.9h1V331.9h1V325.1h1V320.3h1V330.9h1V335.7h1V331.8h1V329.0h1V336.7h1V340.5h1V339.6h1V332.8h1V347.3h1V328.0h1V340.5h1V341.9h1V331.9h1V327.1h1V334.7h1V329.0h1V321.3h1V330.9h1V332.9h1V326.1h1V338.6h1V329.0h1V329.8h1V331.9h1V323.2h1V334.8h1V330.0h1V330.2h1V329.0h1V328.0h1V329.4h1V325.1h1V318.4h1V329.0h1V332.0h1V333.8h1V325.1h1V328.0h1V329.9h1V319.4h1V323.2h1V313.6h1V329.0h1V319.4h1V326.5h1V316.5h1V318.4h1V323.2h1V326.3h1V330.0h1V331.9h1V325.1h1V333.9h1V329.0h1V339.6h1V326.1h1V329.8h1V321.3h1V326.1h1V330.9h1V325.1h1V312.6h1V326.0h1V325.1h1V320.3h1V323.2h1V329.0h1V333.8h1V327.1h1V320.3h1V318.4h1V327.1h1V325.6h1V320.3h1V319.4h1V325.1h1V328.0h1V335.3h1V334.8h1V343.4h1V329.0h1V327.1h1V319.4h1V317.5h1V332.8h1V338.6h1V340.5h1V342.5h1V344.0h1V345.3h1V347.2h1V348.6h1V349.5h1V350.1h1V351.4h1V352.1h1V354.7h1V355.9h1V358.0h1V358.8h1V360.8h1V360.8h1V360.8h1V360.8h1V360.8h1V360.8h1V360.8h1V360.8h1V360.8h1V360.8h1V360.8h1V360.8h1V360.8h1V360.8h1V360.8h1V360.8h1V360.8h1V360.8h1V360.8h1V360.8h1V360.8h1V360.8h1V360.8h1V360.8h1V360.8h1V360.8h1V360.8h1V361.8h-1V361.8h-1V361.8h-1V361.8h-1V361.8h-1V361.8h-1V361.8h-1V361.8h-1V361.8h-1V361.8h-1V361.8h-1V361.8h-1V361.8h-1V361.8h-1V361.8h-1V361.8h-1V361.8h-1V361.8h-1V361.8h-1V361.8h-1V361.8h-1V361.8h-1V361.8h-1V361.8h-1V361.8h-1V361.8h-1V361.8h-1V363.6h-1V364.4h-1V366.5h-1V367.7h-1V370.3h-1V371.4h-1V373.2h-1V373.6h-1V374.2h-1V375.5h-1V377.1h-1V378.5h-1V380.0h-1V381.5h-1V382.8h-1V390.5h-1V405.0h-1V402.1h-1V396.3h-1V394.4h-1V379.0h-1V388.6h-1V389.2h-1V394.4h-1V396.3h-1V403.0h-1V402.1h-1V394.9h-1V394.4h-1V404.0h-1V400.1h-1V390.5h-1V387.4h-1V394.4h-1V396.3h-1V402.1h-1V398.2h-1V397.4h-1V409.8h-1V398.2h-1V392.5h-1V394.4h-1V400.1h-1V393.1h-1V396.3h-1V382.8h-1V394.4h-1V388.9h-1V396.3h-1V390.5h-1V392.5h-1V391.7h-1V398.2h-1V400.1h-1V405.9h-1V395.8h-1V400.1h-1V394.4h-1V408.8h-1V402.1h-1V400.1h-1V394.2h-1V396.3h-1V394.4h-1V388.6h-1V388.9h-1V394.4h-1V404.0h-1V396.3h-1V391.0h-1V394.4h-1V392.5h-1V388.1h-1V388.6h-1V390.5h-1V388.6h-1V390.5h-1V392.8h-1V394.4h-1V384.8h-1V394.4h-1V389.1h-1V392.5h-1V402.1h-1V394.4h-1V388.0h-1V396.3h-1V390.5h-1V384.9h-1V384.8h-1V392.5h-1V376.1h-1V388.6h-1V382.8h-1V384.6h-1V388.6h-1V384.8h-1V385.7h-1V388.6h-1V394.4h-1V402.1h-1V398.2h-1V390.6h-1V392.5h-1V388.6h-1V384.6h-1V384.8h-1V388.6h-1V375.9h-1V392.5h-1V404.0h-1V405.4h-1V405.9h-1V406.9h-1V405.9h-1V404.7h-1V400.1h-1V405.9h-1V401.9h-1V400.1h-1V407.8h-1V411.4h-1V414.6h-1V413.6h-1V411.9h-1V413.6h-1V404.0h-1V411.7h-1V416.5h-1V410.8h-1V411.7h-1V396.3h-1V404.0h-1V404.0h-1V400.3h-1V402.1h-1V391.5h-1V400.1h-1V403.0h-1V398.2h-1V398.5h-1V402.1h-1V407.8h-1V406.8h-1V414.6h-1V411.7h-1V402.7h-1V406.9h-1V404.0h-1V392.5h-1V410.7h-1V404.1h-1V407.8h-1V396.3h-1V409.8h-1V399.7h-1V407.8h-1V394.4h-1V404.0h-1V410.7h-1V405.9h-1V405.9h-1V417.5h-1V411.7h-1V392.5h-1V411.7h-1V406.1h-1V407.8h-1V396.3h-1V391.5h-1V400.8h-1V407.8h-1V404.0h-1V396.3h-1V400.1h-1V398.7h-1V411.7h-1V408.8h-1V404.0h-1V401.2h-1V412.6h-1V394.4h-1V390.5h-1V388.6h-1V381.9h-1V390.5h-1V398.2h-1V389.9h-1V394.4h-1V392.5h-1V400.1h-1V393.0h-1V394.4h-1V390.5h-1V389.1h-1V394.4h-1V398.2h-1V384.8h-1V390.9h-1V398.2h-1V404.0h-1V402.1h-1V393.1h-1V394.4h-1V400.1h-1V396.3h-1V394.4h-1V391.1h-1V400.1h-1V398.2h-1V396.3h-1V392.9h-1V390.5h-1V392.5h-1V389.6h-1V388.6h-1V390.5h-1V386.4h-1V386.7h-1V388.6h-1V386.7h-1V389.6h-1V398.2h-1V386.7h-1V394.4h-1V389.7h-1V388.6h-1V392.5h-1V393.7h-1V398.2h-1V382.8h-1V388.6h-1V392.6h-1V400.1h-1V402.1h-1V390.5h-1V389.8h-1V394.4h-1V388.6h-1V382.8h-1V396.3h-1V393.8h-1V398.2h-1V399.2h-1V394.1h-1V396.3h-1V388.6h-1V383.1h-1V380.9h-1V376.1h-1V383.8h-1V388.6h-1V387.6h-1V394.4h-1V402.1h-1V384.8h-1V390.5h-1V396.0h-1V403.0h-1V400.1h-1V386.7h-1V398.2h-1V393.0h-1V400.1h-1V389.6h-1V389.9h-1V402.1h-1V394.4h-1V386.1h-1V386.7h-1V389.6h-1V389.2h-1V394.4h-1V386.7h-1V398.2h-1V398.2h-1V396.3h-1V394.4h-1V392.8h-1V392.5h-1V387.3h-1V386.7h-1V392.5h-1V386.4h-1V386.7h-1V390.5h-1V388.7h-1V394.4h-1V384.8h-1V391.5h-1V386.9h-1V392.5h-1V396.3h-1V390.1h-1V394.4h-1V398.2h-1V387.8h-1V382.8h-1V398.2h-1V380.9h-1V402.1h-1V396.3h-1V380.9h-1V381.9h-1V384.8h-1V394.4h-1V389.3h-1V386.7h-1V392.5h-1V386.1h-1V394.4h-1V390.5h-1V387.6h-1V388.6h-1V386.7h-1V385.0h-1V388.6h-1V385.8h-1V390.5h-1V392.6h-1V401.1h-1V400.1h-1V391.6h-1V392.5h-1V394.4h-1V393.5h-1V397.3h-1V393.3h-1V396.3h-1V404.0h-1V396.8h-1V398.2h-1V398.2h-1V393.8h-1V388.6h-1V394.4h-1V402.1h-1V400.9h-1V404.0h-1V405.9h-1V402.7h-1V409.8h-1V406.9h-1V398.2h-1V391.8h-1V386.7h-1V394.4h-1V392.9h-1V392.5h-1V394.4h-1V389.2h-1V396.3h-1V377.1h-1V388.6h-1V391.7h-1V396.3h-1V398.2h-1V395.4h-1V399.2h-1V395.1h-1V400.1h-1V390.5h-1V393.9h-1V400.1h-1V398.2h-1V399.2h-1V395.6h-1V396.3h-1V392.8h-1V394.4h-1V398.2h-1V390.1h-1V384.8h-1V400.1h-1V398.2h-1V393.2h-1V394.4h-1V387.3h-1V386.7h-1V385.7h-1V387.5h-1V390.5h-1V396.3h-1V391.1h-1V398.2h-1V405.9h-1V404.0h-1V395.7h-1V396.3h-1V405.0h-1V403.2h-1V398.2h-1V404.0h-1V404.3h-1V411.7h-1V405.9h-1V405.9h-1V394.8h-1V395.3h-1V402.1h-1V400.1h-1V393.4h-1V396.3h-1V395.9h-1V394.4h-1V388.4h-1V390.5h-1V400.0h-1V414.6h-1V411.7h-1V402.1h-1V397.6h-1V396.3h-1V388.1h-1V390.5h-1V387.7h-1V392.5h-1V386.7h-1V389.1h-1V389.6h-1V385.9h-1V394.4h-1V386.9h-1V390.5h-1V396.3h-1V396.3h-1V390.5h-1V388.7h-1V388.6h-1V387.4h-1V394.4h-1V389.4h-1V382.8h-1V386.3h-1V396.3h-1V390.2h-1V392.5h-1V388.2h-1V394.4h-1V397.0h-1V398.2h-1V401.0h-1V402.1h-1V392.8h-1V392.5h-1V386.3h-1V386.7h-1V390.5h-1V382.9h-1V382.8h-1V370.3h-1V380.9h-1V394.4h-1V393.7h-1V399.2h-1V399.0h-1V402.1h-1V397.2h-1V404.0h-1V404.5h-1V405.9h-1V403.3h-1V410.7h-1V399.4h-1V407.8h-1V407.4h-1V413.6h-1V409.6h-1V417.5h-1V407.0h-1V411.7h-1V402.2h-1V405.9h-1V390.5h-1V404.0h-1V399.0h-1V392.5h-1V387.5h-1V396.3h-1V391.4h-1V394.4h-1V391.4h-1V396.3h-1V392.3h-1V402.1h-1V401.7h-1V403.0h-1V394.7h-1V401.1h-1V390.7h-1V390.5h-1V394.6h-1V400.1h-1V394.8h-1V398.2h-1V395.8h-1V396.3h-1V403.2h-1V410.7h-1V407.8h-1V396.9h-1V400.1h-1V396.7h-1V402.1h-1V392.1h-1V388.6h-1V389.7h-1V400.1h-1V398.7h-1V396.3h-1V395.2h-1V400.1h-1V395.3h-1V398.2h-1V395.6h-1V400.1h-1V395.2h-1V404.0h-1V396.9h-1V406.9h-1V401.7h-1V405.9h-1V396.3h-1V386.7h-1V388.6h-1V377.1h-1V394.4h-1V385.7h-1V390.5h-1V388.1h-1V392.5h-1V389.0h-1V391.5h-1V391.7h-1V394.4h-1V392.0h-1V398.2h-1V388.0h-1V386.7h-1V393.1h-1V396.3h-1V398.7h-1V402.1h-1V392.5h-1V394.4h-1V390.4h-1V400.1h-1V390.9h-1V398.2h-1V402.1h-1V395.3h-1V400.1h-1V392.4h-1V384.8h-1V384.8h-1V389.6h-1V384.3h-1V386.7h-1V373.2h-1V386.7h-1V385.4h-1V389.6h-1V384.7h-1V384.8h-1V385.4h-1V394.4h-1V389.1h-1V390.5h-1V388.0h-1V393.4h-1V389.9h-1V388.6h-1V392.7h-1V394.4h-1V396.3h-1V390.5h-1V388.8h-1V386.7h-1V383.4h-1V390.5h-1V387.1h-1V396.3h-1V392.5h-1V385.4h-1V388.6h-1V381.9h-1V380.9h-1V379.6h-1V384.8h-1V387.6h-1V385.3h-1V390.5h-1V388.7h-1V394.4h-1V389.9h-1V402.1h-1V393.6h-1V395.3h-1V392.9h-1V396.3h-1V398.2h-1V393.4h-1V396.3h-1V387.4h-1V386.7h-1V386.4h-1V391.5h-1V388.3h-1V389.6h-1V386.1h-1V386.7h-1V383.7h-1V388.6h-1V388.7h-1V393.4h-1V393.9h-1V401.1h-1V393.7h-1V396.3h-1V391.2h-1V392.5h-1V389.4h-1V388.6h-1V382.4h-1V384.8h-1V388.6h-1V389.3h-1V394.4h-1V387.1h-1V387.6h-1V387.7h-1V392.5h-1V388.2h-1V388.6h-1V392.0h-1V396.3h-1V386.7h-1V380.0h-1V381.0h-1V384.8h-1V396.3h-1V390.2h-1V390.5h-1V386.3h-1V391.5h-1V387.8h-1V388.6h-1V391.9h-1V394.4h-1V392.5h-1V391.8h-1V395.3h-1V391.6h-1V390.5h-1V382.8h-1V382.5h-1V384.8h-1V382.1h-1V380.0h-1V378.9h-1V381.9h-1V378.6h-1V376.1h-1V378.2h-1V382.8h-1V380.3h-1V380.0h-1V381.9h-1V385.0h-1V389.6h-1V388.2h-1V387.6h-1V388.5h-1V388.6h-1V389.6h-1V386.3h-1V389.6h-1V390.1h-1V393.4h-1V387.5h-1V392.5h-1V391.5h-1V384.6h-1V389.6h-1V399.2h-1V387.6h-1V378.0h-1V370.3h-1V395.3h-1V372.3h-1V368.4h-1V368.7h-1V370.3h-1V370.4h-1V371.3h-1V372.3h-1V375.1h-1V369.9h-1V371.3h-1V370.3h-1V369.5h-1V372.3h-1V373.1h-1V376.1h-1V375.9h-1V375.1h-1V374.7h-1V378.0h-1V374.9h-1V376.1h-1V376.0h-1V378.0h-1V376.0h-1V377.1h-1V375.9h-1V375.1h-1V370.8h-1V372.3h-1V369.6h-1V367.5h-1V361.8h-1V361.8h-1V361.8h-1V361.8h-1V361.8h-1Z"/></g><g opacity="0.72"><path d="M17 246.1V245.8h1V245.8h1V245.8h1V245.8h1V245.8h1V245.8h1V239.0h1V230.3h1V233.1h1V229.5h1V228.4h1V229.3h1V227.5h1V225.5h1V232.0h1V230.3h1V232.0h1V233.2h1V230.5h1V228.4h1V229.8h1V227.5h1V233.5h1V232.3h1V234.1h1V235.1h1V230.3h1V233.8h1V229.4h1V229.2h1V230.3h1V233.8h1V232.3h1V234.9h1V230.3h1V234.9h1V237.1h1V235.1h1V231.1h1V221.7h1V208.2h1V215.9h1V222.2h1V217.8h1V214.0h1V217.2h1V210.1h1V214.8h1V216.9h1V215.8h1V213.0h1V212.1h1V212.2h1V217.8h1V222.6h1V214.0h1V222.1h1V227.5h1V228.4h1V225.2h1V222.6h1V226.3h1V230.3h1V228.9h1V221.7h1V224.0h1V226.5h1V225.7h1V221.7h1V229.2h1V225.5h1V217.8h1V214.5h1V212.1h1V220.9h1V215.9h1V212.1h1V215.5h1V219.8h1V222.7h1V217.8h1V220.1h1V216.9h1V215.8h1V210.1h1V223.6h1V224.2h1V219.8h1V221.9h1V210.1h1V213.0h1V217.8h1V219.4h1V214.0h1V219.3h1V217.8h1V215.7h1V214.0h1V217.9h1V219.8h1V217.8h1V220.9h1V219.8h1V220.0h1V214.0h1V218.6h1V212.1h1V208.8h1V207.3h1V210.7h1V214.0h1V216.3h1V219.8h1V217.9h1V215.9h1V219.3h1V217.8h1V220.6h1V210.1h1V220.2h1V222.6h1V217.2h1V210.1h1V214.5h1V209.2h1V207.3h1V211.3h1V210.1h1V210.3h1V205.3h1V218.2h1V212.1h1V221.8h1V217.8h1V220.4h1V221.7h1V225.5h1V223.4h1V217.8h1V220.9h1V212.1h1V212.5h1V218.1h1V208.2h1V213.8h1V215.9h1V223.3h1V217.8h1V219.4h1V214.0h1V210.1h1V219.8h1V222.6h1V210.1h1V219.2h1V217.8h1V217.4h1V214.0h1V218.0h1V212.1h1V223.1h1V220.7h1V223.3h1V219.8h1V228.2h1V226.5h1V235.1h1V217.8h1V220.0h1V216.9h1V222.9h1V223.6h1V220.7h1V208.2h1V214.6h1V206.3h1V213.0h1V217.6h1V205.3h1V209.9h1V214.0h1V217.3h1V206.3h1V209.8h1V214.0h1V222.2h1V220.7h1V219.3h1V210.1h1V219.0h1V217.8h1V222.5h1V214.0h1V215.2h1V217.8h1V220.0h1V214.0h1V217.7h1V212.1h1V229.4h1V211.1h1V218.3h1V227.5h1V201.5h1V209.2h1V202.5h1V201.1h1V200.5h1V203.9h1V208.2h1V210.7h1V207.3h1V207.3h1V208.2h1V210.6h1V210.1h1V211.5h1V203.4h1V218.5h1V217.8h1V212.1h1V202.5h1V214.8h1V208.2h1V208.1h1V198.6h1V197.6h1V208.9h1V214.0h1V210.3h1V205.3h1V212.5h1V204.4h1V208.4h1V217.8h1V217.3h1V206.3h1V207.6h1V205.3h1V203.6h1V204.4h1V207.1h1V210.1h1V215.4h1V213.0h1V217.7h1V211.1h1V222.4h1V217.8h1V204.8h1V201.5h1V217.8h1V200.5h1V199.3h1V193.8h1V192.2h1V190.0h1V199.6h1V194.8h1V195.9h1V198.6h1V194.9h1V194.8h1V207.5h1V200.5h1V211.4h1V203.4h1V214.6h1V207.3h1V204.7h1V202.5h1V214.3h1V212.1h1V223.6h1V237.1h1V216.9h1V222.2h1V229.4h1V219.8h1V218.1h1V208.2h1V215.3h1V204.4h1V206.9h1V212.1h1V210.2h1V210.1h1V217.1h1V213.0h1V210.4h1V208.2h1V219.0h1V224.6h1V223.4h1V213.0h1V222.1h1V215.9h1V211.7h1V212.1h1V208.2h1V207.3h1V214.0h1V220.0h1V211.1h1V218.4h1V215.9h1V224.1h1V220.7h1V210.1h1V217.1h1V215.9h1V213.3h1V212.1h1V214.4h1V204.4h1V196.7h1V192.8h1V211.9h1V215.9h1V221.0h1V212.1h1V211.2h1V213.0h1V213.3h1V210.1h1V204.4h1V213.0h1V214.8h1V200.5h1V197.7h1V195.7h1V198.9h1V206.3h1V200.5h1V213.1h1V209.2h1V202.5h1V204.3h1V208.2h1V201.5h1V210.1h1V210.7h1V208.2h1V214.0h1V222.0h1V220.7h1V221.7h1V221.3h1V214.0h1V217.6h1V208.2h1V207.3h1V223.6h1V217.0h1V210.1h1V214.0h1V213.6h1V208.2h1V207.8h1V210.1h1V214.5h1V207.3h1V214.6h1V210.1h1V209.2h1V206.8h1V206.3h1V214.0h1V210.1h1V208.2h1V216.1h1V217.8h1V230.3h1V210.1h1V216.8h1V211.1h1V214.0h1V218.3h1V210.1h1V221.7h1V217.3h1V208.2h1V199.6h1V197.6h1V210.6h1V202.5h1V205.3h1V210.2h1V202.5h1V211.1h1V217.8h1V217.3h1V210.1h1V208.2h1V213.4h1V202.5h1V210.1h1V211.7h1V212.1h1V213.8h1V215.9h1V213.0h1V211.8h1V207.3h1V206.3h1V209.8h1V215.9h1V222.9h1V217.8h1V218.9h1V220.7h1V217.8h1V218.3h1V219.8h1V213.0h1V212.7h1V214.0h1V221.7h1V221.9h1V214.0h1V217.8h1V222.7h1V226.5h1V214.0h1V206.3h1V225.5h1V213.0h1V225.5h1V218.4h1V210.1h1V214.0h1V217.9h1V219.8h1V210.1h1V217.1h1V215.9h1V224.6h1V211.1h1V214.7h1V215.9h1V221.7h1V223.1h1V215.0h1V220.7h1V216.7h1V214.0h1V216.0h1V213.0h1V206.3h1V204.4h1V206.3h1V219.8h1V212.1h1V214.5h1V217.8h1V219.8h1V220.3h1V214.0h1V205.3h1V218.7h1V217.8h1V208.2h1V209.7h1V207.3h1V219.8h1V210.1h1V204.4h1V212.8h1V217.8h1V220.7h1V205.3h1V212.1h1V219.9h1V217.8h1V222.6h1V232.3h1V225.5h1V227.1h1V217.8h1V223.6h1V215.7h1V208.2h1V210.1h1V213.1h1V207.3h1V217.8h1V225.5h1V215.9h1V221.8h1V217.8h1V207.3h1V206.3h1V215.0h1V219.8h1V223.6h1V210.1h1V214.2h1V214.0h1V219.8h1V218.4h1V215.9h1V221.7h1V209.2h1V220.6h1V222.6h1V215.9h1V219.8h1V219.0h1V213.0h1V218.8h1V219.7h1V214.0h1V216.9h1V213.2h1V212.1h1V208.2h1V207.3h1V216.7h1V214.0h1V210.1h1V206.3h1V214.0h1V219.1h1V208.2h1V203.4h1V208.2h1V217.0h1V222.6h1V210.1h1V214.0h1V221.8h1V217.8h1V214.0h1V209.4h1V207.3h1V214.0h1V215.9h1V212.9h1V207.3h1V214.0h1V224.6h1V217.8h1V215.9h1V208.2h1V194.8h1V205.0h1V202.5h1V207.3h1V195.7h1V202.4h1V204.4h1V211.1h1V208.2h1V200.5h1V207.2h1V215.0h1V210.1h1V203.4h1V198.8h1V198.6h1V214.0h1V196.7h1V190.0h1V208.2h1V212.8h1V202.5h1V194.8h1V213.0h1V203.4h1V209.1h1V198.6h1V210.1h1V207.3h1V201.8h1V196.7h1V210.1h1V202.5h1V198.6h1V198.9h1V194.8h1V198.6h1V207.2h1V203.4h1V208.2h1V216.0h1V209.2h1V203.4h1V208.2h1V216.9h1V204.4h1V213.3h1V202.5h1V200.5h1V214.0h1V194.8h1V194.1h1V192.8h1V198.6h1V208.2h1V196.7h1V204.4h1V195.7h1V192.8h1V194.9h1V201.5h1V208.2h1V206.1h1V202.5h1V207.3h1V207.4h1V204.4h1V202.5h1V200.5h1V206.1h1V201.5h1V212.1h1V228.7h1V217.8h1V225.5h1V223.6h1V221.7h1V216.9h1V219.1h1V210.1h1V205.3h1V215.9h1V220.7h1V223.6h1V214.0h1V221.7h1V222.3h1V224.6h1V217.8h1V232.3h1V213.0h1V225.5h1V224.1h1V216.9h1V212.1h1V219.8h1V214.0h1V206.3h1V215.9h1V218.9h1V211.1h1V223.6h1V214.0h1V223.0h1V216.9h1V208.2h1V219.8h1V215.0h1V218.2h1V214.0h1V213.0h1V213.6h1V210.1h1V203.4h1V214.0h1V216.9h1V218.8h1V210.1h1V213.0h1V214.9h1V204.4h1V208.2h1V198.6h1V214.0h1V204.4h1V209.9h1V201.5h1V203.4h1V208.2h1V218.0h1V215.0h1V216.9h1V210.1h1V212.4h1V214.0h1V224.6h1V211.1h1V206.9h1V206.3h1V211.1h1V215.9h1V210.1h1V197.6h1V208.0h1V210.1h1V205.3h1V208.2h1V214.0h1V213.7h1V212.1h1V205.3h1V203.4h1V212.1h1V213.1h1V205.3h1V204.4h1V210.1h1V213.0h1V222.6h1V219.8h1V228.4h1V214.0h1V212.1h1V204.4h1V202.5h1V217.8h1V223.6h1V225.5h1V227.5h1V229.0h1V230.3h1V232.2h1V233.6h1V234.5h1V235.1h1V236.4h1V237.1h1V239.7h1V240.9h1V243.0h1V243.8h1V245.8h1V245.8h1V245.8h1V245.8h1V245.8h1V245.8h1V245.8h1V245.8h1V245.8h1V245.8h1V245.8h1V245.8h1V245.8h1V245.8h1V245.8h1V245.8h1V245.8h1V245.8h1V245.8h1V245.8h1V245.8h1V245.8h1V245.8h1V245.8h1V245.8h1V245.8h1V245.8h1V246.8h-1V246.8h-1V246.8h-1V246.8h-1V246.8h-1V246.8h-1V246.8h-1V246.8h-1V246.8h-1V246.8h-1V246.8h-1V246.8h-1V246.8h-1V246.8h-1V246.8h-1V246.8h-1V246.8h-1V246.8h-1V246.8h-1V246.8h-1V246.8h-1V246.8h-1V246.8h-1V246.8h-1V246.8h-1V246.8h-1V246.8h-1V248.6h-1V249.4h-1V251.5h-1V252.7h-1V255.3h-1V256.4h-1V258.2h-1V258.6h-1V259.2h-1V260.5h-1V262.1h-1V263.5h-1V265.0h-1V266.5h-1V267.8h-1V275.5h-1V290.0h-1V287.1h-1V281.3h-1V279.4h-1V264.0h-1V273.6h-1V273.3h-1V279.4h-1V281.3h-1V288.0h-1V287.1h-1V278.4h-1V279.4h-1V289.0h-1V285.1h-1V275.5h-1V276.3h-1V279.4h-1V281.3h-1V287.1h-1V283.2h-1V287.1h-1V294.8h-1V283.2h-1V277.5h-1V279.4h-1V285.1h-1V282.7h-1V281.3h-1V267.8h-1V279.4h-1V280.1h-1V281.3h-1V275.5h-1V277.5h-1V276.3h-1V283.2h-1V285.1h-1V290.9h-1V283.1h-1V285.1h-1V279.4h-1V293.8h-1V287.1h-1V285.1h-1V278.6h-1V281.3h-1V279.4h-1V273.6h-1V273.1h-1V279.4h-1V289.0h-1V281.3h-1V278.3h-1V279.4h-1V277.5h-1V270.1h-1V273.6h-1V275.5h-1V273.6h-1V275.5h-1V270.6h-1V279.4h-1V269.8h-1V279.4h-1V275.4h-1V277.5h-1V287.1h-1V279.4h-1V274.3h-1V281.3h-1V275.5h-1V269.4h-1V269.8h-1V277.5h-1V261.1h-1V273.6h-1V267.8h-1V268.6h-1V273.6h-1V269.8h-1V269.7h-1V273.6h-1V279.4h-1V287.1h-1V283.2h-1V275.2h-1V277.5h-1V273.6h-1V270.3h-1V269.8h-1V273.6h-1V261.9h-1V277.5h-1V289.0h-1V288.1h-1V290.9h-1V291.9h-1V290.9h-1V287.0h-1V285.1h-1V290.9h-1V287.7h-1V285.1h-1V292.8h-1V292.4h-1V299.6h-1V298.6h-1V295.0h-1V298.6h-1V289.0h-1V296.7h-1V301.5h-1V297.5h-1V296.7h-1V281.3h-1V289.0h-1V289.0h-1V284.1h-1V287.1h-1V276.5h-1V285.1h-1V288.0h-1V283.2h-1V280.4h-1V287.1h-1V292.8h-1V290.6h-1V299.6h-1V296.7h-1V292.3h-1V291.9h-1V289.0h-1V277.5h-1V295.7h-1V288.7h-1V292.8h-1V281.3h-1V294.8h-1V287.8h-1V292.8h-1V279.4h-1V289.0h-1V295.7h-1V285.2h-1V290.9h-1V302.5h-1V296.7h-1V277.5h-1V296.7h-1V294.3h-1V292.8h-1V281.3h-1V276.5h-1V285.4h-1V292.8h-1V289.0h-1V281.3h-1V285.1h-1V287.4h-1V296.7h-1V293.8h-1V289.0h-1V289.2h-1V297.6h-1V279.4h-1V275.5h-1V273.6h-1V266.9h-1V275.5h-1V283.2h-1V280.7h-1V279.4h-1V277.5h-1V285.1h-1V280.4h-1V279.4h-1V275.5h-1V274.1h-1V279.4h-1V283.2h-1V269.8h-1V276.6h-1V283.2h-1V289.0h-1V287.1h-1V275.0h-1V279.4h-1V285.1h-1V281.3h-1V279.4h-1V278.1h-1V285.1h-1V283.2h-1V281.3h-1V279.8h-1V275.5h-1V277.5h-1V272.9h-1V273.6h-1V275.5h-1V270.1h-1V271.7h-1V273.6h-1V271.7h-1V273.7h-1V283.2h-1V271.7h-1V279.4h-1V276.4h-1V273.6h-1V277.5h-1V277.0h-1V283.2h-1V267.8h-1V273.6h-1V277.1h-1V285.1h-1V287.1h-1V275.5h-1V271.4h-1V279.4h-1V273.6h-1V267.8h-1V281.3h-1V278.7h-1V283.2h-1V284.2h-1V280.5h-1V281.3h-1V273.6h-1V265.0h-1V265.9h-1V261.1h-1V268.8h-1V273.6h-1V270.8h-1V279.4h-1V287.1h-1V269.8h-1V275.5h-1V277.3h-1V288.0h-1V285.1h-1V271.7h-1V283.2h-1V280.7h-1V285.1h-1V274.6h-1V272.7h-1V287.1h-1V279.4h-1V271.9h-1V271.7h-1V274.6h-1V275.6h-1V279.4h-1V271.7h-1V283.2h-1V283.2h-1V281.3h-1V279.4h-1V276.0h-1V277.5h-1V274.6h-1V271.7h-1V277.5h-1V269.0h-1V271.7h-1V275.5h-1V276.1h-1V279.4h-1V269.8h-1V276.5h-1V272.2h-1V277.5h-1V281.3h-1V276.4h-1V279.4h-1V283.2h-1V274.6h-1V267.8h-1V283.2h-1V265.9h-1V287.1h-1V281.3h-1V265.9h-1V267.8h-1V269.8h-1V279.4h-1V273.9h-1V271.7h-1V277.5h-1V275.2h-1V279.4h-1V275.5h-1V272.0h-1V273.6h-1V271.7h-1V270.7h-1V273.6h-1V270.5h-1V275.5h-1V279.6h-1V286.1h-1V285.1h-1V280.3h-1V277.5h-1V279.4h-1V277.5h-1V282.3h-1V277.9h-1V281.3h-1V289.0h-1V280.3h-1V283.2h-1V283.2h-1V276.8h-1V273.6h-1V279.4h-1V287.1h-1V284.3h-1V289.0h-1V290.9h-1V286.0h-1V294.8h-1V291.9h-1V283.2h-1V272.9h-1V271.7h-1V279.4h-1V272.0h-1V277.5h-1V279.4h-1V273.2h-1V281.3h-1V262.1h-1V273.6h-1V274.7h-1V281.3h-1V283.2h-1V279.4h-1V284.2h-1V282.1h-1V285.1h-1V275.5h-1V276.8h-1V285.1h-1V279.0h-1V284.2h-1V280.8h-1V281.3h-1V278.3h-1V279.4h-1V283.2h-1V274.2h-1V269.8h-1V285.1h-1V283.2h-1V275.5h-1V279.4h-1V271.7h-1V271.7h-1V270.7h-1V269.9h-1V275.5h-1V281.3h-1V280.7h-1V283.2h-1V290.9h-1V289.0h-1V285.3h-1V281.3h-1V290.0h-1V282.5h-1V283.2h-1V289.0h-1V289.1h-1V296.7h-1V294.4h-1V290.9h-1V276.6h-1V280.3h-1V287.1h-1V285.1h-1V280.7h-1V281.3h-1V278.8h-1V279.4h-1V270.6h-1V275.5h-1V283.6h-1V299.6h-1V296.7h-1V287.1h-1V279.2h-1V281.3h-1V276.2h-1V275.5h-1V275.3h-1V277.5h-1V271.7h-1V270.7h-1V274.6h-1V274.7h-1V279.4h-1V270.6h-1V275.5h-1V281.3h-1V281.3h-1V275.5h-1V273.9h-1V273.6h-1V269.7h-1V279.4h-1V272.3h-1V267.8h-1V270.0h-1V281.3h-1V275.6h-1V277.5h-1V275.7h-1V279.4h-1V280.1h-1V283.2h-1V284.3h-1V287.1h-1V274.5h-1V277.5h-1V270.2h-1V271.7h-1V275.5h-1V269.1h-1V267.8h-1V255.3h-1V265.9h-1V279.4h-1V277.4h-1V284.2h-1V285.0h-1V287.1h-1V283.5h-1V289.0h-1V280.3h-1V290.9h-1V286.6h-1V295.7h-1V295.5h-1V292.8h-1V294.7h-1V298.6h-1V292.8h-1V302.5h-1V295.4h-1V296.7h-1V290.8h-1V290.9h-1V275.5h-1V289.0h-1V282.9h-1V277.5h-1V272.0h-1V281.3h-1V277.2h-1V279.4h-1V279.2h-1V281.3h-1V283.3h-1V287.1h-1V285.2h-1V288.0h-1V286.2h-1V286.1h-1V274.9h-1V275.5h-1V281.7h-1V285.1h-1V277.8h-1V283.2h-1V278.1h-1V281.3h-1V288.4h-1V295.7h-1V292.8h-1V285.3h-1V285.1h-1V280.7h-1V287.1h-1V277.1h-1V273.6h-1V274.4h-1V285.1h-1V278.5h-1V281.3h-1V280.7h-1V285.1h-1V285.2h-1V283.2h-1V279.2h-1V285.1h-1V288.1h-1V289.0h-1V286.0h-1V291.9h-1V282.2h-1V290.9h-1V281.3h-1V274.5h-1V273.6h-1V262.1h-1V279.4h-1V276.3h-1V275.5h-1V274.1h-1V277.5h-1V277.9h-1V276.5h-1V271.8h-1V279.4h-1V277.6h-1V283.2h-1V274.4h-1V271.7h-1V273.4h-1V281.3h-1V282.8h-1V287.1h-1V279.9h-1V279.4h-1V280.9h-1V285.1h-1V279.5h-1V283.2h-1V287.1h-1V282.0h-1V285.1h-1V272.5h-1V269.8h-1V270.6h-1V274.6h-1V269.5h-1V271.7h-1V258.2h-1V271.7h-1V270.5h-1V274.6h-1V268.2h-1V269.8h-1V269.8h-1V279.4h-1V273.3h-1V275.5h-1V275.1h-1V278.4h-1V270.1h-1V273.6h-1V273.2h-1V279.4h-1V281.3h-1V275.5h-1V269.4h-1V271.7h-1V269.4h-1V275.5h-1V274.7h-1V281.3h-1V271.2h-1V272.0h-1V273.6h-1V266.7h-1V265.9h-1V268.5h-1V269.8h-1V272.6h-1V273.4h-1V275.5h-1V272.7h-1V279.4h-1V274.8h-1V287.1h-1V280.3h-1V280.3h-1V278.5h-1V281.3h-1V283.2h-1V277.7h-1V281.3h-1V275.1h-1V271.7h-1V269.9h-1V276.5h-1V272.6h-1V274.6h-1V270.7h-1V271.7h-1V271.4h-1V273.6h-1V276.0h-1V278.4h-1V282.5h-1V286.1h-1V279.5h-1V281.3h-1V274.9h-1V277.5h-1V272.3h-1V273.6h-1V270.2h-1V269.8h-1V273.6h-1V272.9h-1V279.4h-1V275.7h-1V272.6h-1V273.7h-1V277.5h-1V271.2h-1V273.6h-1V276.6h-1V281.3h-1V269.9h-1V265.0h-1V264.0h-1V269.8h-1V281.3h-1V275.5h-1V275.5h-1V274.5h-1V276.5h-1V271.1h-1V273.6h-1V276.4h-1V279.4h-1V277.5h-1V273.9h-1V280.3h-1V276.5h-1V275.5h-1V267.8h-1V264.1h-1V269.8h-1V266.1h-1V265.0h-1V266.0h-1V266.9h-1V262.1h-1V261.1h-1V264.2h-1V267.8h-1V265.4h-1V265.0h-1V269.8h-1V272.8h-1V278.4h-1V271.2h-1V275.5h-1V277.8h-1V277.5h-1V279.4h-1V274.8h-1V276.5h-1V276.7h-1V281.3h-1V273.8h-1V279.4h-1V277.5h-1V273.7h-1V279.4h-1V285.1h-1V273.6h-1V260.7h-1V252.5h-1V254.4h-1V254.5h-1V256.3h-1V256.5h-1V261.1h-1V259.9h-1V263.0h-1V262.2h-1V263.0h-1V259.3h-1V261.1h-1V255.3h-1V255.5h-1V260.1h-1V260.0h-1V263.0h-1V262.2h-1V264.0h-1V260.8h-1V261.1h-1V261.0h-1V263.0h-1V260.7h-1V266.9h-1V265.3h-1V263.0h-1V264.0h-1V261.7h-1V261.0h-1V262.1h-1V253.4h-1V246.8h-1V246.8h-1V246.8h-1V246.8h-1V246.8h-1V246.8h-1Z"/><path d="M17 361.1V360.8h1V360.8h1V360.8h1V360.8h1V360.8h1V355.0h1V352.8h1V350.1h1V351.7h1V347.3h1V346.3h1V345.3h1V345.6h1V344.4h1V346.4h1V346.3h1V346.5h1V344.4h1V348.1h1V348.2h1V347.4h1V346.3h1V348.6h1V350.1h1V353.3h1V353.0h1V349.2h1V351.3h1V346.3h1V348.5h1V348.2h1V350.9h1V351.1h1V353.4h1V354.0h1V349.2h1V327.1h1V353.0h1V343.4h1V335.7h1V324.2h1V333.8h1V339.7h1V336.7h1V333.8h1V335.4h1V329.0h1V335.0h1V333.8h1V333.7h1V331.9h1V333.8h1V333.9h1V335.7h1V335.8h1V333.8h1V340.5h1V345.3h1V343.4h1V343.7h1V337.6h1V340.6h1V345.3h1V341.3h1V336.7h1V341.7h1V341.5h1V340.8h1V336.7h1V341.2h1V340.5h1V332.8h1V333.6h1V327.1h1V329.3h1V330.9h1V327.1h1V331.8h1V334.8h1V334.9h1V332.8h1V337.5h1V331.9h1V329.1h1V325.1h1V338.6h1V336.2h1V334.8h1V329.0h1V325.1h1V328.3h1V332.8h1V333.4h1V329.0h1V333.0h1V332.8h1V334.9h1V329.0h1V335.7h1V334.8h1V332.8h1V335.0h1V334.8h1V333.0h1V329.0h1V327.5h1V327.1h1V326.0h1V322.3h1V327.1h1V329.0h1V336.9h1V334.8h1V338.7h1V330.9h1V331.8h1V332.8h1V334.1h1V325.1h1V336.5h1V337.6h1V336.6h1V325.1h1V331.5h1V324.2h1V322.3h1V331.3h1V325.1h1V331.9h1V320.3h1V333.3h1V327.1h1V331.2h1V332.8h1V340.5h1V336.7h1V340.5h1V341.2h1V332.8h1V329.4h1V327.1h1V334.1h1V326.7h1V323.2h1V335.0h1V330.9h1V338.9h1V332.8h1V330.6h1V329.0h1V325.1h1V334.8h1V331.2h1V325.1h1V327.4h1V332.8h1V334.5h1V329.0h1V329.8h1V327.1h1V337.4h1V335.7h1V334.9h1V334.8h1V340.0h1V341.5h1V350.1h1V332.8h1V335.0h1V331.9h1V335.4h1V338.6h1V330.0h1V323.2h1V331.1h1V321.3h1V328.0h1V332.8h1V320.3h1V332.0h1V329.0h1V333.5h1V321.3h1V327.9h1V329.0h1V331.2h1V335.7h1V335.8h1V325.1h1V334.7h1V332.8h1V332.4h1V329.0h1V332.4h1V332.8h1V333.9h1V329.0h1V335.7h1V327.1h1V344.4h1V326.1h1V336.1h1V342.5h1V316.5h1V318.2h1V317.5h1V326.1h1V315.5h1V326.1h1V323.2h1V326.2h1V322.3h1V328.5h1V323.2h1V330.9h1V325.1h1V319.7h1V318.4h1V331.2h1V332.8h1V325.4h1V317.5h1V326.2h1V323.2h1V324.6h1V313.6h1V312.6h1V317.9h1V329.0h1V329.2h1V320.3h1V322.6h1V319.4h1V323.4h1V332.8h1V335.4h1V321.3h1V329.3h1V320.3h1V319.7h1V319.4h1V331.8h1V325.1h1V331.1h1V328.0h1V333.0h1V326.1h1V337.5h1V332.8h1V326.1h1V316.5h1V332.8h1V315.5h1V323.8h1V308.8h1V317.3h1V305.0h1V313.8h1V309.8h1V312.5h1V313.6h1V321.9h1V309.8h1V323.3h1V315.5h1V319.5h1V318.4h1V322.3h1V322.3h1V321.2h1V317.5h1V325.1h1V327.1h1V338.6h1V352.1h1V331.9h1V340.2h1V344.4h1V334.8h1V331.1h1V323.2h1V325.2h1V319.4h1V321.2h1V327.1h1V325.1h1V325.1h1V331.9h1V328.0h1V329.0h1V323.2h1V336.0h1V339.6h1V331.7h1V328.0h1V330.0h1V330.9h1V332.7h1V327.1h1V323.2h1V322.3h1V329.0h1V334.7h1V326.1h1V335.1h1V330.9h1V332.6h1V335.7h1V325.1h1V329.4h1V330.9h1V334.0h1V327.1h1V324.8h1V319.4h1V311.7h1V307.8h1V322.6h1V330.9h1V335.3h1V327.1h1V326.5h1V328.0h1V333.5h1V325.1h1V319.4h1V328.0h1V325.5h1V315.5h1V313.0h1V310.7h1V317.4h1V321.3h1V315.5h1V319.0h1V324.2h1V317.5h1V324.0h1V323.2h1V316.5h1V325.1h1V328.4h1V323.2h1V329.0h1V334.2h1V335.7h1V336.7h1V337.4h1V329.0h1V328.4h1V323.2h1V322.3h1V338.6h1V334.2h1V325.1h1V329.0h1V328.0h1V323.2h1V322.6h1V325.1h1V324.7h1V322.3h1V324.8h1V325.1h1V324.2h1V329.3h1V321.3h1V328.3h1V325.1h1V323.2h1V327.3h1V332.8h1V345.3h1V325.1h1V334.2h1V326.1h1V329.0h1V328.7h1V325.1h1V336.7h1V331.4h1V323.2h1V314.6h1V312.6h1V326.4h1V317.5h1V320.3h1V319.8h1V317.5h1V326.1h1V332.8h1V328.5h1V325.1h1V323.2h1V329.0h1V317.5h1V325.1h1V327.0h1V327.1h1V330.7h1V330.9h1V328.0h1V332.8h1V322.3h1V321.3h1V332.1h1V330.9h1V335.1h1V332.8h1V336.7h1V335.7h1V332.8h1V338.8h1V334.8h1V328.0h1V335.7h1V329.0h1V336.7h1V335.5h1V329.0h1V332.8h1V338.7h1V341.5h1V329.0h1V321.3h1V340.5h1V328.0h1V340.5h1V336.3h1V325.1h1V329.0h1V336.0h1V334.8h1V325.1h1V331.4h1V330.9h1V339.6h1V326.1h1V335.7h1V330.9h1V336.7h1V338.8h1V330.0h1V335.7h1V333.2h1V329.0h1V329.8h1V328.0h1V321.3h1V319.4h1V321.3h1V334.8h1V327.1h1V329.4h1V332.8h1V334.8h1V337.4h1V329.0h1V320.3h1V331.7h1V332.8h1V323.2h1V331.8h1V322.3h1V334.8h1V325.1h1V319.4h1V323.7h1V332.8h1V335.7h1V320.3h1V327.1h1V333.2h1V332.8h1V337.6h1V347.3h1V340.5h1V339.9h1V332.8h1V338.6h1V335.3h1V323.2h1V325.1h1V327.2h1V322.3h1V332.8h1V340.5h1V330.9h1V330.9h1V332.8h1V322.3h1V321.3h1V327.1h1V334.8h1V338.6h1V325.1h1V329.2h1V329.0h1V334.8h1V333.6h1V330.9h1V336.7h1V324.2h1V330.2h1V337.6h1V330.9h1V334.8h1V332.6h1V328.0h1V333.8h1V333.6h1V329.0h1V331.9h1V329.3h1V327.1h1V323.2h1V322.3h1V331.4h1V329.0h1V325.1h1V321.3h1V329.0h1V329.9h1V323.2h1V318.4h1V323.2h1V334.1h1V337.6h1V325.1h1V329.0h1V337.3h1V332.8h1V329.0h1V329.7h1V322.3h1V329.0h1V330.9h1V331.7h1V322.3h1V329.0h1V339.6h1V332.8h1V330.9h1V323.2h1V309.8h1V318.8h1V317.5h1V322.3h1V310.7h1V321.2h1V319.4h1V326.1h1V323.2h1V315.5h1V321.8h1V330.0h1V325.1h1V318.4h1V320.6h1V313.6h1V329.0h1V311.7h1V305.0h1V323.2h1V318.7h1V317.5h1V309.8h1V328.0h1V318.4h1V325.6h1V313.6h1V325.1h1V322.3h1V324.3h1V311.7h1V325.1h1V317.5h1V313.6h1V318.4h1V309.8h1V313.6h1V316.3h1V318.4h1V323.2h1V324.0h1V324.2h1V318.4h1V323.2h1V331.9h1V319.4h1V323.8h1V317.5h1V315.5h1V329.0h1V309.8h1V316.2h1V307.8h1V313.6h1V323.2h1V311.7h1V309.9h1V310.7h1V307.8h1V313.8h1V316.5h1V323.2h1V321.5h1V317.5h1V322.3h1V320.0h1V319.4h1V317.5h1V315.5h1V317.0h1V316.5h1V327.1h1V347.0h1V332.8h1V340.5h1V339.5h1V336.7h1V331.9h1V331.9h1V325.1h1V320.3h1V330.9h1V335.7h1V331.8h1V329.0h1V336.7h1V340.5h1V339.6h1V332.8h1V347.3h1V328.0h1V340.5h1V341.9h1V331.9h1V327.1h1V334.7h1V329.0h1V321.3h1V330.9h1V332.9h1V326.1h1V338.6h1V329.0h1V329.8h1V331.9h1V323.2h1V334.8h1V330.0h1V330.2h1V329.0h1V328.0h1V329.4h1V325.1h1V318.4h1V329.0h1V332.0h1V333.8h1V325.1h1V328.0h1V329.9h1V319.4h1V323.2h1V313.6h1V329.0h1V319.4h1V326.5h1V316.5h1V318.4h1V323.2h1V326.3h1V330.0h1V331.9h1V325.1h1V333.9h1V329.0h1V339.6h1V326.1h1V329.8h1V321.3h1V326.1h1V330.9h1V325.1h1V312.6h1V326.0h1V325.1h1V320.3h1V323.2h1V329.0h1V333.8h1V327.1h1V320.3h1V318.4h1V327.1h1V325.6h1V320.3h1V319.4h1V325.1h1V328.0h1V335.3h1V334.8h1V343.4h1V329.0h1V327.1h1V319.4h1V317.5h1V332.8h1V338.6h1V340.5h1V342.5h1V344.0h1V345.3h1V347.2h1V348.6h1V349.5h1V350.1h1V351.4h1V352.1h1V354.7h1V355.9h1V358.0h1V358.8h1V360.8h1V360.8h1V360.8h1V360.8h1V360.8h1V360.8h1V360.8h1V360.8h1V360.8h1V360.8h1V360.8h1V360.8h1V360.8h1V360.8h1V360.8h1V360.8h1V360.8h1V360.8h1V360.8h1V360.8h1V360.8h1V360.8h1V360.8h1V360.8h1V360.8h1V360.8h1V360.8h1V361.8h-1V361.8h-1V361.8h-1V361.8h-1V361.8h-1V361.8h-1V361.8h-1V361.8h-1V361.8h-1V361.8h-1V361.8h-1V361.8h-1V361.8h-1V361.8h-1V361.8h-1V361.8h-1V361.8h-1V361.8h-1V361.8h-1V361.8h-1V361.8h-1V361.8h-1V361.8h-1V361.8h-1V361.8h-1V361.8h-1V361.8h-1V363.6h-1V364.4h-1V366.5h-1V367.7h-1V370.3h-1V371.4h-1V373.2h-1V373.6h-1V374.2h-1V375.5h-1V377.1h-1V378.5h-1V380.0h-1V381.5h-1V382.8h-1V390.5h-1V405.0h-1V402.1h-1V396.3h-1V394.4h-1V379.0h-1V388.6h-1V389.2h-1V394.4h-1V396.3h-1V403.0h-1V402.1h-1V394.9h-1V394.4h-1V404.0h-1V400.1h-1V390.5h-1V387.4h-1V394.4h-1V396.3h-1V402.1h-1V398.2h-1V397.4h-1V409.8h-1V398.2h-1V392.5h-1V394.4h-1V400.1h-1V393.1h-1V396.3h-1V382.8h-1V394.4h-1V388.9h-1V396.3h-1V390.5h-1V392.5h-1V391.7h-1V398.2h-1V400.1h-1V405.9h-1V395.8h-1V400.1h-1V394.4h-1V408.8h-1V402.1h-1V400.1h-1V394.2h-1V396.3h-1V394.4h-1V388.6h-1V388.9h-1V394.4h-1V404.0h-1V396.3h-1V391.0h-1V394.4h-1V392.5h-1V388.1h-1V388.6h-1V390.5h-1V388.6h-1V390.5h-1V392.8h-1V394.4h-1V384.8h-1V394.4h-1V389.1h-1V392.5h-1V402.1h-1V394.4h-1V388.0h-1V396.3h-1V390.5h-1V384.9h-1V384.8h-1V392.5h-1V376.1h-1V388.6h-1V382.8h-1V384.6h-1V388.6h-1V384.8h-1V385.7h-1V388.6h-1V394.4h-1V402.1h-1V398.2h-1V390.6h-1V392.5h-1V388.6h-1V384.6h-1V384.8h-1V388.6h-1V375.9h-1V392.5h-1V404.0h-1V405.4h-1V405.9h-1V406.9h-1V405.9h-1V404.7h-1V400.1h-1V405.9h-1V401.9h-1V400.1h-1V407.8h-1V411.4h-1V414.6h-1V413.6h-1V411.9h-1V413.6h-1V404.0h-1V411.7h-1V416.5h-1V410.8h-1V411.7h-1V396.3h-1V404.0h-1V404.0h-1V400.3h-1V402.1h-1V391.5h-1V400.1h-1V403.0h-1V398.2h-1V398.5h-1V402.1h-1V407.8h-1V406.8h-1V414.6h-1V411.7h-1V402.7h-1V406.9h-1V404.0h-1V392.5h-1V410.7h-1V404.1h-1V407.8h-1V396.3h-1V409.8h-1V399.7h-1V407.8h-1V394.4h-1V404.0h-1V410.7h-1V405.9h-1V405.9h-1V417.5h-1V411.7h-1V392.5h-1V411.7h-1V406.1h-1V407.8h-1V396.3h-1V391.5h-1V400.8h-1V407.8h-1V404.0h-1V396.3h-1V400.1h-1V398.7h-1V411.7h-1V408.8h-1V404.0h-1V401.2h-1V412.6h-1V394.4h-1V390.5h-1V388.6h-1V381.9h-1V390.5h-1V398.2h-1V389.9h-1V394.4h-1V392.5h-1V400.1h-1V393.0h-1V394.4h-1V390.5h-1V389.1h-1V394.4h-1V398.2h-1V384.8h-1V390.9h-1V398.2h-1V404.0h-1V402.1h-1V393.1h-1V394.4h-1V400.1h-1V396.3h-1V394.4h-1V391.1h-1V400.1h-1V398.2h-1V396.3h-1V392.9h-1V390.5h-1V392.5h-1V389.6h-1V388.6h-1V390.5h-1V386.4h-1V386.7h-1V388.6h-1V386.7h-1V389.6h-1V398.2h-1V386.7h-1V394.4h-1V389.7h-1V388.6h-1V392.5h-1V393.7h-1V398.2h-1V382.8h-1V388.6h-1V392.6h-1V400.1h-1V402.1h-1V390.5h-1V389.8h-1V394.4h-1V388.6h-1V382.8h-1V396.3h-1V393.8h-1V398.2h-1V399.2h-1V394.1h-1V396.3h-1V388.6h-1V383.1h-1V380.9h-1V376.1h-1V383.8h-1V388.6h-1V387.6h-1V394.4h-1V402.1h-1V384.8h-1V390.5h-1V396.0h-1V403.0h-1V400.1h-1V386.7h-1V398.2h-1V393.0h-1V400.1h-1V389.6h-1V389.9h-1V402.1h-1V394.4h-1V386.1h-1V386.7h-1V389.6h-1V389.2h-1V394.4h-1V386.7h-1V398.2h-1V398.2h-1V396.3h-1V394.4h-1V392.8h-1V392.5h-1V387.3h-1V386.7h-1V392.5h-1V386.4h-1V386.7h-1V390.5h-1V388.7h-1V394.4h-1V384.8h-1V391.5h-1V386.9h-1V392.5h-1V396.3h-1V390.1h-1V394.4h-1V398.2h-1V387.8h-1V382.8h-1V398.2h-1V380.9h-1V402.1h-1V396.3h-1V380.9h-1V381.9h-1V384.8h-1V394.4h-1V389.3h-1V386.7h-1V392.5h-1V386.1h-1V394.4h-1V390.5h-1V387.6h-1V388.6h-1V386.7h-1V385.0h-1V388.6h-1V385.8h-1V390.5h-1V392.6h-1V401.1h-1V400.1h-1V391.6h-1V392.5h-1V394.4h-1V393.5h-1V397.3h-1V393.3h-1V396.3h-1V404.0h-1V396.8h-1V398.2h-1V398.2h-1V393.8h-1V388.6h-1V394.4h-1V402.1h-1V400.9h-1V404.0h-1V405.9h-1V402.7h-1V409.8h-1V406.9h-1V398.2h-1V391.8h-1V386.7h-1V394.4h-1V392.9h-1V392.5h-1V394.4h-1V389.2h-1V396.3h-1V377.1h-1V388.6h-1V391.7h-1V396.3h-1V398.2h-1V395.4h-1V399.2h-1V395.1h-1V400.1h-1V390.5h-1V393.9h-1V400.1h-1V398.2h-1V399.2h-1V395.6h-1V396.3h-1V392.8h-1V394.4h-1V398.2h-1V390.1h-1V384.8h-1V400.1h-1V398.2h-1V393.2h-1V394.4h-1V387.3h-1V386.7h-1V385.7h-1V387.5h-1V390.5h-1V396.3h-1V391.1h-1V398.2h-1V405.9h-1V404.0h-1V395.7h-1V396.3h-1V405.0h-1V403.2h-1V398.2h-1V404.0h-1V404.3h-1V411.7h-1V405.9h-1V405.9h-1V394.8h-1V395.3h-1V402.1h-1V400.1h-1V393.4h-1V396.3h-1V395.9h-1V394.4h-1V388.4h-1V390.5h-1V400.0h-1V414.6h-1V411.7h-1V402.1h-1V397.6h-1V396.3h-1V388.1h-1V390.5h-1V387.7h-1V392.5h-1V386.7h-1V389.1h-1V389.6h-1V385.9h-1V394.4h-1V386.9h-1V390.5h-1V396.3h-1V396.3h-1V390.5h-1V388.7h-1V388.6h-1V387.4h-1V394.4h-1V389.4h-1V382.8h-1V386.3h-1V396.3h-1V390.2h-1V392.5h-1V388.2h-1V394.4h-1V397.0h-1V398.2h-1V401.0h-1V402.1h-1V392.8h-1V392.5h-1V386.3h-1V386.7h-1V390.5h-1V382.9h-1V382.8h-1V370.3h-1V380.9h-1V394.4h-1V393.7h-1V399.2h-1V399.0h-1V402.1h-1V397.2h-1V404.0h-1V404.5h-1V405.9h-1V403.3h-1V410.7h-1V399.4h-1V407.8h-1V407.4h-1V413.6h-1V409.6h-1V417.5h-1V407.0h-1V411.7h-1V402.2h-1V405.9h-1V390.5h-1V404.0h-1V399.0h-1V392.5h-1V387.5h-1V396.3h-1V391.4h-1V394.4h-1V391.4h-1V396.3h-1V392.3h-1V402.1h-1V401.7h-1V403.0h-1V394.7h-1V401.1h-1V390.7h-1V390.5h-1V394.6h-1V400.1h-1V394.8h-1V398.2h-1V395.8h-1V396.3h-1V403.2h-1V410.7h-1V407.8h-1V396.9h-1V400.1h-1V396.7h-1V402.1h-1V392.1h-1V388.6h-1V389.7h-1V400.1h-1V398.7h-1V396.3h-1V395.2h-1V400.1h-1V395.3h-1V398.2h-1V395.6h-1V400.1h-1V395.2h-1V404.0h-1V396.9h-1V406.9h-1V401.7h-1V405.9h-1V396.3h-1V386.7h-1V388.6h-1V377.1h-1V394.4h-1V385.7h-1V390.5h-1V388.1h-1V392.5h-1V389.0h-1V391.5h-1V391.7h-1V394.4h-1V392.0h-1V398.2h-1V388.0h-1V386.7h-1V393.1h-1V396.3h-1V398.7h-1V402.1h-1V392.5h-1V394.4h-1V390.4h-1V400.1h-1V390.9h-1V398.2h-1V402.1h-1V395.3h-1V400.1h-1V392.4h-1V384.8h-1V384.8h-1V389.6h-1V384.3h-1V386.7h-1V373.2h-1V386.7h-1V385.4h-1V389.6h-1V384.7h-1V384.8h-1V385.4h-1V394.4h-1V389.1h-1V390.5h-1V388.0h-1V393.4h-1V389.9h-1V388.6h-1V392.7h-1V394.4h-1V396.3h-1V390.5h-1V388.8h-1V386.7h-1V383.4h-1V390.5h-1V387.1h-1V396.3h-1V392.5h-1V385.4h-1V388.6h-1V381.9h-1V380.9h-1V379.6h-1V384.8h-1V387.6h-1V385.3h-1V390.5h-1V388.7h-1V394.4h-1V389.9h-1V402.1h-1V393.6h-1V395.3h-1V392.9h-1V396.3h-1V398.2h-1V393.4h-1V396.3h-1V387.4h-1V386.7h-1V386.4h-1V391.5h-1V388.3h-1V389.6h-1V386.1h-1V386.7h-1V383.7h-1V388.6h-1V388.7h-1V393.4h-1V393.9h-1V401.1h-1V393.7h-1V396.3h-1V391.2h-1V392.5h-1V389.4h-1V388.6h-1V382.4h-1V384.8h-1V388.6h-1V389.3h-1V394.4h-1V387.1h-1V387.6h-1V387.7h-1V392.5h-1V388.2h-1V388.6h-1V392.0h-1V396.3h-1V386.7h-1V380.0h-1V381.0h-1V384.8h-1V396.3h-1V390.2h-1V390.5h-1V386.3h-1V391.5h-1V387.8h-1V388.6h-1V391.9h-1V394.4h-1V392.5h-1V391.8h-1V395.3h-1V391.6h-1V390.5h-1V382.8h-1V382.5h-1V384.8h-1V382.1h-1V380.0h-1V378.9h-1V381.9h-1V378.6h-1V376.1h-1V378.2h-1V382.8h-1V380.3h-1V380.0h-1V381.9h-1V385.0h-1V389.6h-1V388.2h-1V387.6h-1V388.5h-1V388.6h-1V389.6h-1V386.3h-1V389.6h-1V390.1h-1V393.4h-1V387.5h-1V392.5h-1V391.5h-1V384.6h-1V389.6h-1V399.2h-1V387.6h-1V378.0h-1V370.3h-1V395.3h-1V372.3h-1V368.4h-1V368.7h-1V370.3h-1V370.4h-1V371.3h-1V372.3h-1V375.1h-1V369.9h-1V371.3h-1V370.3h-1V369.5h-1V372.3h-1V373.1h-1V376.1h-1V375.9h-1V375.1h-1V374.7h-1V378.0h-1V374.9h-1V376.1h-1V376.0h-1V378.0h-1V376.0h-1V377.1h-1V375.9h-1V375.1h-1V370.8h-1V372.3h-1V369.6h-1V367.5h-1V361.8h-1V361.8h-1V361.8h-1V361.8h-1V361.8h-1Z"/></g></g><path fill="#00ff00" d="M17 246h7v1h-7zM742 246h27v1h-27zM17 361h7v1h-7zM742 361h27v1h-27z"/>
</svg>
<div id="chsep"></div>
<div id="cursor"></div>
<div class="chl" style="top:195px">Channel 0</div>
<div class="chl" style="top:310px">Channel 1</div>
<div style="left:0;top:0;width:786px;height:1px;background:#1d3a5c"></div>
<div style="left:0;top:0;width:1px;height:593px;background:linear-gradient(to bottom,#1d3a5c 0%,#2a4a6a 30%,#3f6078 62%,#5c7a86 100%)"></div>
<div style="left:785px;top:0;width:1px;height:593px;background:linear-gradient(to bottom,#1d3a5c 0%,#27496c 60%,#2d5478 100%)"></div>
<div style="left:0;top:592px;width:786px;height:1px;background:linear-gradient(to right,#5c7a86,#2d5478)"></div>
</body></html>
